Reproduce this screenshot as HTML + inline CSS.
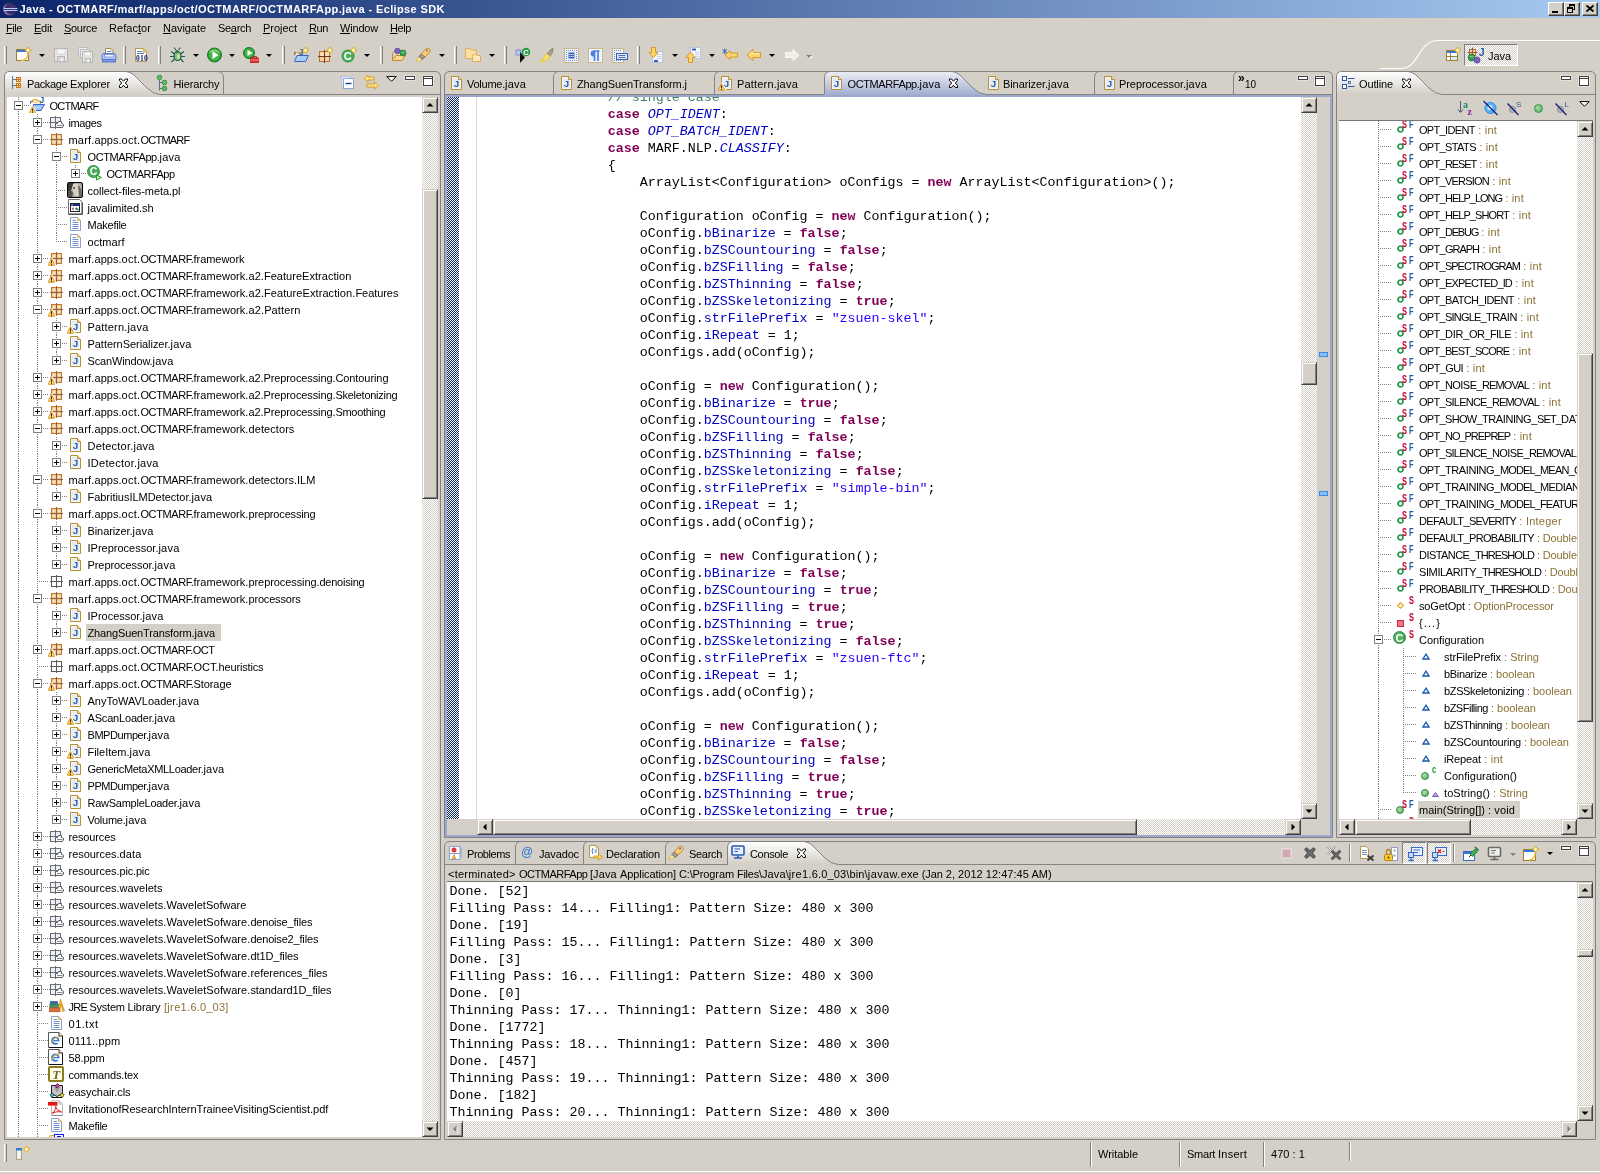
<!DOCTYPE html>
<html lang="en"><head><meta charset="utf-8"><title>Java - OCTMARF/marf/apps/oct/OCTMARF/OCTMARFApp.java - Eclipse SDK</title>
<style>
*{box-sizing:border-box;margin:0;padding:0}
html,body{width:1600px;height:1174px;overflow:hidden;background:#d4d0c8}
body{font-family:"Liberation Sans",sans-serif;font-size:11px;color:#000;position:relative}
div,span.a,svg.ic{position:absolute}
.t{position:absolute;white-space:pre;line-height:17px;height:17px}
.mono{font-family:"Liberation Mono",monospace;font-size:13.33px}
.code{position:absolute;white-space:pre;line-height:17px;height:17px;font-family:"Liberation Mono",monospace;font-size:13.33px;left:479.700px}
.con{position:absolute;white-space:pre;line-height:17px;height:17px;font-family:"Liberation Mono",monospace;font-size:13.33px;left:449.500px}
.k{color:#7f0055;font-weight:bold}
.f{color:#0000c0}
.sf{color:#0000c0;font-style:italic}
.s{color:#2a00ff}
.c{color:#3f7f5f}
.q{color:#8b7135}
.sbtrack{background-color:#fff;background-image:conic-gradient(#d4d0c8 25%,#fff 0 50%,#d4d0c8 0 75%,#fff 0);background-size:2px 2px}
.sbb{width:16px;height:16px;background:#d4d0c8;border:1px solid;border-color:#d4d0c8 #404040 #404040 #d4d0c8;box-shadow:inset 1px 1px 0 #fff,inset -1px -1px 0 #808080}
.sbb svg{left:1px!important;top:1px!important}
.sbt{background:#d4d0c8;border:1px solid;border-color:#d4d0c8 #404040 #404040 #d4d0c8;box-shadow:inset 1px 1px 0 #fff,inset -1px -1px 0 #808080;box-sizing:content-box;padding:1px}
.exp{width:9px;height:9px;border:1px solid #808080;background:#fff}
.exp i{position:absolute;left:1px;top:3px;width:5px;height:1px;background:#000}
.exp b{position:absolute;left:3px;top:1px;width:1px;height:5px;background:#000}
.vd{width:1px;background-image:linear-gradient(#808080 50%,transparent 0);background-size:1px 2px}
.hd{height:1px;background-image:linear-gradient(90deg,#808080 50%,transparent 0);background-size:2px 1px}
.sep{width:3px;height:18px;border-left:1px solid #fff;border-right:1px solid #808080;background:#d4d0c8}
.dd{width:0;height:0;border-left:3px solid transparent;border-right:3px solid transparent;border-top:3px solid #000}
.u{text-decoration:underline}
.cp{letter-spacing:-.58px}
</style></head>
<body>
<svg width="0" height="0" style="position:absolute"><defs><radialGradient id="pg" cx=".5" cy=".5" r=".62"><stop offset="0" stop-color="#fef6cc"/><stop offset="1" stop-color="#e6b68c"/></radialGradient></defs></svg>
<div id="root" style="left:0;top:0;width:1600px;height:1174px;will-change:transform;background:#d4d0c8;overflow:hidden">
<div style="left:0;top:0;width:1600px;height:18px;background:linear-gradient(90deg,#0a246a 0%,#a6caf0 100%)"></div>
<svg class="ic" style="left:2px;top:1px" width="18" height="16" viewBox="0 0 18 16"><defs><radialGradient id="eg" cx=".62" cy=".45" r=".62"><stop offset="0" stop-color="#4a4088"/><stop offset=".6" stop-color="#2e2660"/><stop offset=".85" stop-color="#6a5498"/><stop offset="1" stop-color="#d8a0c8"/></radialGradient></defs><ellipse cx="8.200" cy="8" rx="7" ry="6.300" fill="url(#eg)"/><path d="M9 2 Q14.500 3 15.200 8 Q14.500 13 9 14 Q15.500 13.500 15.300 8 Q15.500 2.500 9 2 Z" fill="#1a1a58"/><path d="M2 7.500 H15.500 M2 9.500 H15.500" stroke="#b8d0f4" stroke-width="1"/><path d="M1.500 8.500 H15.500" stroke="#3a3a80" stroke-width="1"/></svg>
<div class="t" style="left:19.500px;top:1px;color:#fff;font-weight:bold;font-size:11px;line-height:16px;height:16px;letter-spacing:.38px">Java - OCTMARF/marf/apps/oct/OCTMARF/OCTMARFApp.java - Eclipse SDK</div>
<div style="left:1548px;top:2px;width:16px;height:14px;background:#d4d0c8;border:1px solid;border-color:#fff #404040 #404040 #fff;box-shadow:inset -1px -1px 0 #808080"></div><div style="left:1564px;top:2px;width:16px;height:14px;background:#d4d0c8;border:1px solid;border-color:#fff #404040 #404040 #fff;box-shadow:inset -1px -1px 0 #808080"></div><div style="left:1582px;top:2px;width:16px;height:14px;background:#d4d0c8;border:1px solid;border-color:#fff #404040 #404040 #fff;box-shadow:inset -1px -1px 0 #808080"></div><div style="left:1552px;top:11px;width:6px;height:2px;background:#000"></div><svg class="ic" style="left:1567px;top:4px" width="10" height="10" viewBox="0 0 10 10"><g shape-rendering="crispEdges"><path d="M2.500 .5 H7.500 V5.500 H2.500 Z" fill="none" stroke="#000"/><rect x="2" y="0" width="6" height="2" fill="#000"/><rect x="0" y="3" width="6" height="6" fill="#d4d0c8"/><path d="M.5 3.500 H5.500 V8.500 H.5 Z" fill="none" stroke="#000"/><rect x="0" y="3" width="6" height="2" fill="#000"/></g></svg><svg class="ic" style="left:1585px;top:4px" width="10" height="10" viewBox="0 0 10 10"><path d="M1.500 1.500 L8.500 7.500 M8.500 1.500 L1.500 7.500" stroke="#000" stroke-width="1.700"/></svg>
<div class="t" style="left:6px;top:20px;letter-spacing:-0.43px"><span class="u">F</span>ile</div>
<div class="t" style="left:34px;top:20px;letter-spacing:-0.242px"><span class="u">E</span>dit</div>
<div class="t" style="left:64px;top:20px;letter-spacing:-0.312px"><span class="u">S</span>ource</div>
<div class="t" style="left:109px;top:20px;letter-spacing:0.051px">Refac<span class="u">t</span>or</div>
<div class="t" style="left:163px;top:20px;letter-spacing:-0.055px"><span class="u">N</span>avigate</div>
<div class="t" style="left:218px;top:20px;letter-spacing:-0.312px">Se<span class="u">a</span>rch</div>
<div class="t" style="left:263px;top:20px;letter-spacing:-0.036px"><span class="u">P</span>roject</div>
<div class="t" style="left:309px;top:20px;letter-spacing:-0.396px"><span class="u">R</span>un</div>
<div class="t" style="left:340px;top:20px;letter-spacing:-0.188px"><span class="u">W</span>indow</div>
<div class="t" style="left:390px;top:20px;letter-spacing:-0.406px"><span class="u">H</span>elp</div>
<div class="sep" style="left:4px;top:46px;height:18px"></div><svg class="ic" style="left:16px;top:47px" width="16" height="16" viewBox="0 0 16 16"><rect x=".5" y="2.500" width="12" height="11" fill="#fff" stroke="#a08030"/><rect x="1" y="3" width="11" height="2" fill="#3a78d8"/><path d="M12 6 Q12 13 5 13.500" stroke="#f0c040" stroke-width="1.500" fill="none"/><path d="M12 0 l1.200 2 l2 1.200 l-2 1.200 l-1.200 2 l-1.200 -2 l-2 -1.200 l2 -1.200 Z" fill="#fff8c0" stroke="#d8a010" stroke-width=".9"/></svg><div class="dd" style="left:39px;top:54px;border-top-color:#000"></div><svg class="ic" style="left:53px;top:47px" width="16" height="16" viewBox="0 0 16 16"><path d="M1.500 1.500 H14.500 V14.500 H1.500 Z" fill="#e8e8e8" stroke="#b4b4b4"/><rect x="4" y="2" width="8" height="5" fill="#f8f8f8" stroke="#c8c8c8" stroke-width=".6"/><rect x="4.500" y="9.500" width="7" height="5" fill="#dadada" stroke="#b8b8b8"/><rect x="8" y="11" width="2" height="3" fill="#f4f4f4"/></svg><svg class="ic" style="left:77px;top:47px" width="16" height="16" viewBox="0 0 16 16"><path d="M1.500 .5 H10.500 V9 H1.500 Z" fill="#eee" stroke="#bcbcbc"/><path d="M3.500 2.500 H12.500 V11 H3.500 Z" fill="#eee" stroke="#bcbcbc"/><path d="M5.500 4.500 H15.500 V15.500 H5.500 Z" fill="#e8e8e8" stroke="#b4b4b4"/><rect x="7.500" y="5" width="6" height="4" fill="#f8f8f8" stroke="#c8c8c8" stroke-width=".6"/><rect x="8" y="11.500" width="5.500" height="4" fill="#dadada" stroke="#b8b8b8"/><rect x="10.500" y="12.500" width="1.500" height="3" fill="#f4f4f4"/></svg><svg class="ic" style="left:101px;top:47px" width="16" height="16" viewBox="0 0 16 16"><path d="M4.500 1.500 H10 L12 3.500 V8 H4.500 Z" fill="#fff" stroke="#9a8a60"/><path d="M10 1.500 V3.500 H12" fill="#f4d880" stroke="#c8a040" stroke-width=".7"/><path d="M6 4.500 H10 M6 6.500 H10.500" stroke="#5a80d0"/><path d="M1 9 Q1 6.500 3 6.500 H13 Q15 6.500 15 9 V12.500 H1 Z" fill="#b4c8f2" stroke="#5878d0"/><rect x="1.500" y="12.500" width="13" height="2.500" fill="#7a98e4" stroke="#5878d0"/><rect x="3.500" y="7.500" width="9" height="2.500" fill="#f0f4fc" stroke="#6a88d8" stroke-width=".7"/></svg><div class="sep" style="left:123px;top:46px;height:18px"></div><svg class="ic" style="left:134px;top:47px" width="16" height="16" viewBox="0 0 16 16"><path d="M1.500 1.500 H9 L12.500 5 V14.500 H1.500 Z" fill="#fff" stroke="#b49a50"/><path d="M9 1.500 V5 H12.500 Z" fill="#f4d880" stroke="#c8a040" stroke-width=".7"/><path d="M3 4.500 H8 M3 6.500 H10" stroke="#5a80d0"/><text x="2" y="14" font-family="Liberation Serif, serif" font-weight="bold" font-size="7.500" fill="#14206a" letter-spacing=".3">010</text></svg><div class="sep" style="left:158px;top:46px;height:18px"></div><svg class="ic" style="left:169px;top:47px" width="16" height="16" viewBox="0 0 16 16"><ellipse cx="8.500" cy="9" rx="3.500" ry="4.500" fill="#8cc078" stroke="#1a5a4a" stroke-width="1.200"/><circle cx="8" cy="4.500" r="1.600" fill="#2a6a5a"/><path d="M5.500 7 L2 4.500 M5 9.500 L1 9.500 M5.500 12 L2.500 15 M11.500 7 L15 4.500 M12 9.500 L16 9.500 M11.500 12 L14.500 15 M7 3 L5 .5 M9.500 3 L11.500 .5" stroke="#1a5a4a" stroke-width="1.100" fill="none"/><ellipse cx="9.500" cy="9.500" rx="1.500" ry="2.500" fill="#c8e8b0"/></svg><div class="dd" style="left:193px;top:54px;border-top-color:#000"></div><svg class="ic" style="left:207px;top:47px" width="16" height="16" viewBox="0 0 16 16"><circle cx="7.500" cy="8" r="7" fill="#2a9a34" stroke="#1a7a24"/><circle cx="7.500" cy="8" r="5.500" fill="#48b84c"/><path d="M5.500 4 L11.500 8 L5.500 12 Z" fill="#fff"/><path d="M2.500 5.500 Q7 1 12.500 5.500" stroke="#a8e8a0" stroke-width="1.200" fill="none" opacity=".7"/></svg><div class="dd" style="left:229px;top:54px;border-top-color:#000"></div><svg class="ic" style="left:243px;top:47px" width="16" height="16" viewBox="0 0 16 16"><circle cx="6" cy="6" r="5.500" fill="#2a9a34" stroke="#1a7a24"/><circle cx="6" cy="6" r="4.200" fill="#48b84c"/><path d="M4.500 3 L9.500 6 L4.500 9 Z" fill="#fff"/><rect x="7.500" y="11" width="8.500" height="5" rx=".8" fill="#e03030" stroke="#a81818" stroke-width=".8"/><path d="M10 11 V9.700 H13.500 V11" fill="none" stroke="#a81818" stroke-width="1"/><path d="M7.500 13 H16" stroke="#f8b0b0" stroke-width=".8"/></svg><div class="dd" style="left:266px;top:54px;border-top-color:#000"></div><div class="sep" style="left:282px;top:46px;height:18px"></div><svg class="ic" style="left:293px;top:47px" width="16" height="16" viewBox="0 0 16 16"><path d="M1 5.500 H4.500 M1.500 5.500 V8" stroke="#7a6ab0" fill="none"/><path d="M2.500 8 V6.500 L3.500 5.500 H10 V8" fill="#fbe3a0" stroke="#d6a64a"/><path d="M4 8.500 H15.500 L12.500 14.500 H1.500 Z" fill="#a9cdf6" stroke="#3a62c8"/><text x="5.5" y="8" font-family="Liberation Sans, sans-serif" font-weight="bold" font-size="9" fill="#2a5fa8">J</text><path d="M12.5 0 l1.200 2 l2 1.200 l-2 1.200 l-1.200 2 l-1.200 -2 l-2 -1.200 l2 -1.200 Z" fill="#fff8c0" stroke="#d8a010" stroke-width=".9"/></svg><svg class="ic" style="left:318px;top:47px" width="16" height="16" viewBox="0 0 16 16"><rect x="1.500" y="4.500" width="10" height="10" fill="#f0c898" stroke="#b8743a"/><rect x="2.500" y="5.500" width="3.500" height="3.500" fill="#f8e0b8"/><rect x="7.500" y="5.500" width="3.500" height="3.500" fill="#f8e0b8"/><rect x="2.500" y="10" width="3.500" height="3.500" fill="#f4d4a4"/><rect x="7.500" y="10" width="3.500" height="3.500" fill="#f4d4a4"/><path d="M6.500 3 V16 M0 9.500 H13" stroke="#6a3a1a" fill="none"/><path d="M12 0 l1.200 2 l2 1.200 l-2 1.200 l-1.200 2 l-1.200 -2 l-2 -1.200 l2 -1.200 Z" fill="#fff8c0" stroke="#d8a010" stroke-width=".9"/></svg><svg class="ic" style="left:341px;top:47px" width="16" height="16" viewBox="0 0 16 16"><circle cx="7" cy="9" r="6.500" fill="#2f9a44"/><circle cx="7" cy="9" r="5.300" fill="#4fae60"/><text x="2.800" y="13" font-family="Liberation Sans, sans-serif" font-weight="bold" font-size="11" fill="#fff">C</text><path d="M12.5 0 l1.200 2 l2 1.200 l-2 1.200 l-1.200 2 l-1.200 -2 l-2 -1.200 l2 -1.200 Z" fill="#fff8c0" stroke="#d8a010" stroke-width=".9"/></svg><div class="dd" style="left:364px;top:54px;border-top-color:#000"></div><div class="sep" style="left:380px;top:46px;height:18px"></div><svg class="ic" style="left:391px;top:47px" width="16" height="16" viewBox="0 0 16 16"><path d="M1.500 6 V13.500 H11 L14.500 8.500 H5 L2.500 12" fill="#fbd88a" stroke="#c8862a"/><path d="M1.500 6.500 L3 5 H8 L9 6.500 H12 V8.500" fill="#fde8b0" stroke="#c8862a"/><circle cx="6.500" cy="4" r="2.800" fill="#7a62c0" stroke="#5a42a0" stroke-width=".8"/><circle cx="12" cy="6" r="3" fill="#3aa050" stroke="#1a8030" stroke-width=".8"/><path d="M10.500 5.500 H13.500" stroke="#9ad8a0" stroke-width=".8"/></svg><svg class="ic" style="left:415px;top:47px" width="16" height="16" viewBox="0 0 16 16"><path d="M1 14.500 L4 9.500 L7 12.500 Z" fill="#fff4b0" stroke="#e0b830" stroke-width=".8"/><path d="M4 9.500 L6.500 6.500 L10 10 L7 12.500 Z" fill="#a09a98" stroke="#6a6462" stroke-width=".8"/><path d="M6.500 6.500 L11 1.500 Q13.500 .5 15 2.500 Q15.500 4.500 14.500 5.500 L10 10 Z" fill="#f8cc70" stroke="#c8862a" stroke-width=".9"/><circle cx="12" cy="3.500" r=".9" fill="#3a62c8"/></svg><div class="dd" style="left:439px;top:54px;border-top-color:#000"></div><div class="sep" style="left:454px;top:46px;height:18px"></div><svg class="ic" style="left:465px;top:47px" width="16" height="16" viewBox="0 0 16 16"><path d="M.5 3.500 Q.5 1.500 2 1.500 H5 L6.500 3 H11.500 V11.500 H.5 Z" fill="#fbe0a0" stroke="#dcae58"/><path d="M7.500 9.500 Q7.500 7.500 9 7.500 H11 L12 8.500 H15.500 V14.500 H7.500 Z" fill="#fce8b8" stroke="#dcae58"/></svg><div class="dd" style="left:489px;top:54px;border-top-color:#000"></div><div class="sep" style="left:504px;top:46px;height:18px"></div><svg class="ic" style="left:515px;top:47px" width="16" height="16" viewBox="0 0 16 16"><rect x="1" y="3" width="5" height="5" fill="#b8c8f4" stroke="#6a84d8" stroke-width=".8"/><path d="M2 2.500 H5" stroke="#c090d0"/><path d="M5 5 V16 L10 10.500 Z" fill="#111"/><circle cx="11" cy="5" r="4.300" fill="#2f9a44"/><text x="8.300" y="8" font-family="Liberation Sans, sans-serif" font-weight="bold" font-size="7.500" fill="#fff">C</text></svg><svg class="ic" style="left:539px;top:47px" width="16" height="16" viewBox="0 0 16 16"><path d="M.5 14.500 H5.500" stroke="#f0d020" stroke-width="1.500"/><path d="M3 12.500 L8 6.500 L11.500 9 L7 13.500 Z" fill="#f8e060" stroke="#e0c020" stroke-width=".6"/><path d="M8 6.500 L11.500 2.500 L14 4.500 L11.500 9 Z" fill="#aaa090" stroke="#8a8070" stroke-width=".6"/><path d="M11.500 2.500 L14.500 .5 L14 4.500 Z" fill="#8a8070"/></svg><svg class="ic" style="left:564px;top:47px" width="16" height="16" viewBox="0 0 16 16"><rect x=".5" y="1.500" width="14" height="14" fill="#eef2fc" stroke="#c8b888"/><path d="M2 3.500 H13 M2 13.500 H13" stroke="#6a90d8" stroke-dasharray="1 1"/><path d="M2.500 5 V12 M12.500 5 V12" stroke="#6a90d8" stroke-dasharray="1 1"/><rect x="4.500" y="5.500" width="6" height="6" fill="#3a5eb8"/><path d="M5 7.500 H10 M5 9.500 H10" stroke="#c8d8f8" stroke-width=".8"/></svg><svg class="ic" style="left:588px;top:47px" width="16" height="16" viewBox="0 0 16 16"><rect x=".5" y="1.500" width="14" height="14" fill="#fff" stroke="#c8b888"/><rect x="1.500" y="2.500" width="12" height="12" fill="#e8f0fc"/><path d="M11.500 4 H6.500 Q3.500 4 3.500 6.500 Q3.500 9 6.500 9 V14 M6.500 4 V14 M10 4 V14" stroke="#4a80d8" stroke-width="1.600" fill="none"/><rect x="4" y="4.500" width="2.500" height="4" fill="#4a80d8"/></svg><svg class="ic" style="left:612px;top:47px" width="16" height="16" viewBox="0 0 16 16"><rect x=".5" y="1.500" width="11" height="14" fill="#eef2fc" stroke="#c8b888"/><path d="M2 3.500 H10 M2 5.500 H4 M2 7.500 H4 M2 9.500 H4 M2 11.500 H4 M2 13.500 H10" stroke="#6a90d8" stroke-dasharray="1 1"/><rect x="4.500" y="6.500" width="11" height="6" fill="#e4ecfa" stroke="#3a5eb8"/><path d="M6.500 8.500 H13.500 M6.500 10.500 H13.500" stroke="#3a5eb8" stroke-width=".9"/></svg><div class="sep" style="left:637px;top:46px;height:18px"></div><svg class="ic" style="left:648px;top:47px" width="16" height="16" viewBox="0 0 16 16"><rect x="4.500" y="4.500" width="10" height="11" fill="#f4f6fc" stroke="#b8c4e0"/><path d="M9 7.500 H13 M9 9.500 H13 M9 11.500 H13" stroke="#c8d0e8"/><rect x="6" y="13" width="4" height="2" fill="#3a5eb8"/><path d="M3.500 .5 H7.500 V5.500 H10 L5.500 10.500 L1 5.500 H3.500 Z" fill="#fbd470" stroke="#d89a20"/></svg><div class="dd" style="left:672px;top:54px;border-top-color:#000"></div><svg class="ic" style="left:685px;top:47px" width="16" height="16" viewBox="0 0 16 16"><rect x="5.500" y=".5" width="10" height="11" fill="#f4f6fc" stroke="#b8c4e0"/><path d="M10 5.500 H14 M10 7.500 H14 M10 9.500 H14" stroke="#c8d0e8"/><rect x="7" y="1.500" width="4" height="2" fill="#3a5eb8"/><path d="M3.500 15.500 H7.500 V10.500 H10 L5.500 5 L1 10.500 H3.500 Z" fill="#fbd470" stroke="#d89a20"/></svg><div class="dd" style="left:709px;top:54px;border-top-color:#000"></div><svg class="ic" style="left:722px;top:47px" width="16" height="16" viewBox="0 0 16 16"><path d="M3 8 L8 3.500 V6 H15.500 V10 H8 V12.500 Z" fill="#fbd470" stroke="#d89a20"/><path d="M.5 2.500 L5 6 M.5 6 L5 2.500 M2.700 1.500 V7" stroke="#2a5ab8" stroke-width=".9"/></svg><svg class="ic" style="left:746px;top:47px" width="16" height="16" viewBox="0 0 16 16"><path d="M1 8 L7 2.500 V5.500 H14.500 V10.500 H7 V13.500 Z" fill="#fbd470" stroke="#d89a20"/><path d="M3 8 L6.500 4.800 V6.500 H13.500" stroke="#fff0b8" fill="none"/></svg><div class="dd" style="left:769px;top:54px;border-top-color:#000"></div><svg class="ic" style="left:784px;top:47px" width="16" height="16" viewBox="0 0 16 16"><path d="M15 8 L9 2.500 V5.500 H1.500 V10.500 H9 V13.500 Z" fill="#eeeeea" stroke="#f8f8f6"/></svg><div class="dd" style="left:806px;top:55px;border-top-color:#808080"></div><div class="dd" style="left:807px;top:56px;border-top-color:#fff;z-index:-1"></div>
<svg class="ic" style="left:1380px;top:38px" width="220" height="34" viewBox="0 0 220 34"><path d="M0 30.500 H21 C39 30.500 38 2.500 58 2.500 H220" fill="none" stroke="#fff" stroke-width="1.200"/></svg><div style="left:1464px;top:44px;width:54px;height:22px;border:1px solid;border-color:#808080 #fff #fff #808080;background-color:#fff;background-image:conic-gradient(#d4d0c8 25%,#fff 0 50%,#d4d0c8 0 75%,#fff 0);background-size:2px 2px"></div><svg class="ic" style="left:1446px;top:47px" width="16" height="16" viewBox="0 0 16 16"><rect x=".5" y="3.500" width="11" height="10" fill="#fff" stroke="#a08030"/><rect x="1" y="4" width="10" height="2" fill="#3a78d8"/><path d="M4.500 6 V13 M.5 9.500 H11.500" stroke="#a08030"/><rect x="5" y="10" width="6" height="3" fill="#d8ecfc"/><path d="M11.5 0 l1.200 2 l2 1.200 l-2 1.200 l-1.200 2 l-1.200 -2 l-2 -1.200 l2 -1.200 Z" fill="#fff8c0" stroke="#d8a010" stroke-width=".9"/></svg><svg class="ic" style="left:1467px;top:47px" width="18" height="17" viewBox="0 0 18 17"><rect x="2.500" y="2.500" width="6" height="6" fill="#f4d8a8" stroke="#b06a3a"/><path d="M5.500 .5 V10 M.5 5.500 H10.500" stroke="#9a5a3a"/><circle cx="4.500" cy="10.500" r="3.400" fill="#3a9e50" stroke="#1a7a30" stroke-width=".8"/><path d="M2.500 9.500 H6.500" stroke="#8fd49a" stroke-width=".8"/><circle cx="10" cy="13" r="3.100" fill="#7a62c0" stroke="#5a42a0" stroke-width=".8"/><text x="11.8" y="8.5" font-family="Liberation Sans, sans-serif" font-weight="bold" font-size="10.5" fill="#2a5fa8">J</text></svg><div class="t" style="left:1488px;top:48px"><span style="letter-spacing:-0.062px">Java</span></div>
<svg class="ic" style="left:0;top:0;z-index:1" width="1600" height="1174" viewBox="0 0 1600 1174"><defs><linearGradient id="gw" x1="0" y1="0" x2="0" y2="1"><stop offset="0" stop-color="#fff"/><stop offset="1" stop-color="#d4d0c8"/></linearGradient><linearGradient id="gb" x1="0" y1="0" x2="0" y2="1"><stop offset="0" stop-color="#eceef6"/><stop offset=".45" stop-color="#c8cee4"/><stop offset="1" stop-color="#9ba8cc"/></linearGradient></defs><path d="M4.500 1139.500 V77 Q4.500 71.500 10 71.500 H435 Q440.500 71.500 440.500 77 V1139.500 Z" fill="none" stroke="#848284" stroke-width="1" /><path d="M5 94 V77 Q5 72 10 72 H126 Q132 71.5 138 78.5 L147 87.5 Q153 93.5 160 94 Z" fill="url(#gw)" stroke="none" stroke-width="1" /><path d="M126 71.500 Q132 72.0 138 79.0 L147 88.0 Q153 94.0 160 94.5 H440" fill="none" stroke="#848284" stroke-width="1" /><path d="M218 71.500 Q223.500 72 223.500 78 V94" fill="none" stroke="#848284" stroke-width="1" /><path d="M444.500 837.500 V77 Q444.500 71.500 450 71.500 H1327 Q1332.500 71.500 1332.500 77 V837.500 Z" fill="none" stroke="#848284" stroke-width="1" /><path d="M446 96 H1331 V836 H446 Z" fill="none" stroke="#9ba8cc" stroke-width="2"/><path d="M445 94.500 H1332" fill="none" stroke="#848284" stroke-width="1" /><path d="M824.500 94 V78 Q824.500 72 830 72 H952 Q958 71.5 964 78.5 L973 87.5 Q979 93.5 986 94 L986 97 H824.500 Z" fill="url(#gb)" stroke="none" stroke-width="1" /><path d="M824.500 94 V78 Q824.500 71.500 830 71.500 H952 Q958 72.0 964 79.0 L973 88.0 Q979 94.0 986 94.5" fill="none" stroke="#848284" stroke-width="1" /><path d="M825 95.500 H992" stroke="#9ba8cc" stroke-width="1"/><path d="M553.5 94 V78 Q553.5 72 558 71.500" fill="none" stroke="#848284" stroke-width="1" /><path d="M714.5 94 V78 Q714.5 72 719 71.500" fill="none" stroke="#848284" stroke-width="1" /><path d="M1094.5 94 V78 Q1094.5 72 1099 71.500" fill="none" stroke="#848284" stroke-width="1" /><path d="M1233.5 94 V78 Q1233.5 72 1238 71.500" fill="none" stroke="#848284" stroke-width="1" /><path d="M1336.500 837.500 V77 Q1336.500 71.500 1342 71.500 H1590 Q1595.500 71.500 1595.500 77 V837.500 Z" fill="none" stroke="#848284" stroke-width="1" /><path d="M1337 94 V77 Q1337 72 1342 72 H1408 Q1414 71.5 1420 78.5 L1429 87.5 Q1435 93.5 1442 94 Z" fill="url(#gw)" stroke="none" stroke-width="1" /><path d="M1408 71.500 Q1414 72.0 1420 79.0 L1429 88.0 Q1435 94.0 1442 94.5 H1595" fill="none" stroke="#848284" stroke-width="1" /><path d="M1339 120.500 H1593" fill="none" stroke="#7a7874" stroke-width="1" /><path d="M444.500 1139.500 V847 Q444.500 841.500 450 841.500 H1590 Q1595.500 841.500 1595.500 847 V1139.500 Z" fill="none" stroke="#848284" stroke-width="1" /><path d="M727.500 864 V848 Q727.500 842 733 842 H804 Q810 841.5 816 848.5 L825 857.5 Q831 863.5 838 864 Z" fill="url(#gw)" stroke="none" stroke-width="1" /><path d="M445 864.500 H727.500 V848 Q727.500 841.500 733 841.500" fill="none" stroke="#848284" stroke-width="1" /><path d="M804 841.500 Q810 842.0 816 849.0 L825 858.0 Q831 864.0 838 864.5 H1595" fill="none" stroke="#848284" stroke-width="1" /><path d="M515.5 864 V848 Q515.5 842 520 841.500" fill="none" stroke="#848284" stroke-width="1" /><path d="M583.5 864 V848 Q583.5 842 588 841.500" fill="none" stroke="#848284" stroke-width="1" /><path d="M665.5 864 V848 Q665.5 842 670 841.500" fill="none" stroke="#848284" stroke-width="1" /><path d="M447 881.500 H1593" fill="none" stroke="#7a7874" stroke-width="1" /></svg>
<div style="left:7px;top:97px;width:415px;height:1040px;background:#fff;overflow:hidden"></div>
<div style="left:0;top:0;width:422px;height:1137px;overflow:hidden;background:transparent"><div class="vd" style="left:18px;top:97px;height:4px"></div>
<div class="vd" style="left:18px;top:111px;height:3px"></div>
<div class="hd" style="left:24px;top:105px;width:5px"></div>
<div class="exp" style="left:14px;top:101px"><i></i></div>
<svg class="ic" style="left:29px;top:97px" width="16" height="16" viewBox="0 0 16 16"><path d="M2.5 5.5 L4 2.5 H8 L9 4 H11.5 V7" fill="#fbe3a0" stroke="#d6a64a"/><path d="M1 4.5 H4 M1.5 4.5 V7" stroke="#7a6ab0" fill="none"/><path d="M4.5 7.5 H15.5 L12 13.5 H2.5 Z" fill="#7fb0ee" stroke="#3a62c8"/><path d="M5.5 8.5 H14 L11.5 12.5 H4 Z" fill="#a9cdf6"/><text x="10.6" y="6.4" font-family="Liberation Sans, sans-serif" font-weight="bold" font-size="8.5" fill="#2a5fa8">J</text><g transform="translate(0,1.2)"><path d="M3.500 7.600 L7.800 15.500" stroke="#fff" stroke-width="1.600" fill="none"/><path d="M3.500 8.600 L.4 14.600 Q.2 15.600 1.200 15.600 L5.800 15.600 Q6.800 15.600 6.600 14.600 Z" fill="#fbd070" stroke="#d8921c" stroke-width=".9"/><rect x="3" y="10.4" width="1" height="3" fill="#3a2a10"/><rect x="3" y="14" width="1" height="1" fill="#3a2a10"/></g></svg>
<div class="t" style="left:49.5px;top:98px"><span style="letter-spacing:-0.768px">OCTMARF</span></div>
<div class="vd" style="left:18px;top:114px;height:17px"></div>
<div class="vd" style="left:37px;top:114px;height:4px"></div>
<div class="vd" style="left:37px;top:128px;height:3px"></div>
<div class="hd" style="left:43px;top:122px;width:5px"></div>
<div class="exp" style="left:33px;top:118px"><i></i><b></b></div>
<svg class="ic" style="left:48px;top:114px" width="16" height="16" viewBox="0 0 16 16"><rect x="2.500" y="3.500" width="10" height="10" fill="#eaf0fb" stroke="#6e6e6e"/><path d="M7.500 2 V15 M1 8.500 H14" stroke="#6e6e6e" fill="none"/><path d="M7.500 13.500 V9.500 H9.500 L10.500 7.500 H13.500 V9.500 H14.500 L15.800 11 L14.500 13.500 Z" fill="#fff" stroke="#5e5e5e"/><path d="M9 11.500 H14.500" stroke="#8a8a8a"/></svg>
<div class="t" style="left:68.5px;top:115px"><span style="letter-spacing:-0.411px">images</span></div>
<div class="vd" style="left:18px;top:131px;height:17px"></div>
<div class="vd" style="left:37px;top:131px;height:4px"></div>
<div class="vd" style="left:37px;top:145px;height:3px"></div>
<div class="hd" style="left:43px;top:139px;width:5px"></div>
<div class="exp" style="left:33px;top:135px"><i></i></div>
<svg class="ic" style="left:48px;top:131px" width="16" height="16" viewBox="0 0 16 16"><rect x="3.500" y="3.500" width="10" height="10" fill="#e9bc8e" stroke="#c6782c"/><rect x="4" y="4" width="4" height="4" fill="url(#pg)"/><rect x="9" y="4" width="4" height="4" fill="url(#pg)"/><rect x="4" y="9" width="4" height="4" fill="url(#pg)"/><rect x="9" y="9" width="4" height="4" fill="url(#pg)"/><path d="M8.500 2 V15 M2 8.500 H15" stroke="#94603e" stroke-width="1" fill="none"/></svg>
<div class="t" style="left:68.5px;top:132px"><span style="letter-spacing:0.188px">marf.</span><span style="letter-spacing:0.013px">apps.</span><span style="letter-spacing:0.312px">oct.</span><span style="letter-spacing:-0.768px">OCTMARF</span></div>
<div class="vd" style="left:18px;top:148px;height:17px"></div>
<div class="vd" style="left:37px;top:148px;height:17px"></div>
<div class="vd" style="left:56px;top:148px;height:4px"></div>
<div class="vd" style="left:56px;top:162px;height:3px"></div>
<div class="hd" style="left:62px;top:156px;width:5px"></div>
<div class="exp" style="left:52px;top:152px"><i></i></div>
<svg class="ic" style="left:67px;top:148px" width="16" height="16" viewBox="0 0 16 16"><path d="M3.5 1.5 H10.5 L13.5 4.5 V14.5 H3.5 Z" fill="#fff" stroke="#b9902f"/><path d="M4.5 2.5 H10 L12.5 5 V13.5 H4.5 Z" fill="#e4ecf8"/><path d="M10.5 1.5 V4.5 H13.5" fill="#f6e3a8" stroke="#b9902f"/><text x="5.7" y="12" font-family="Liberation Sans, sans-serif" font-weight="bold" font-size="9.8" fill="#2a5fa8">J</text></svg>
<div class="t" style="left:87.5px;top:149px"><span style="letter-spacing:-0.402px">OCTMARFApp.</span><span style="letter-spacing:0.203px">java</span></div>
<div class="vd" style="left:18px;top:165px;height:17px"></div>
<div class="vd" style="left:37px;top:165px;height:17px"></div>
<div class="vd" style="left:56px;top:165px;height:17px"></div>
<div class="vd" style="left:75px;top:165px;height:4px"></div>
<div class="hd" style="left:81px;top:173px;width:5px"></div>
<div class="exp" style="left:71px;top:169px"><i></i><b></b></div>
<svg class="ic" style="left:86px;top:165px" width="16" height="16" viewBox="0 0 16 16"><circle cx="7.500" cy="6.500" r="6.500" fill="#37964a"/><circle cx="7.500" cy="6.500" r="5.500" fill="#4aaa5c"/><text x="3.800" y="10.200" font-family="Liberation Sans, sans-serif" font-weight="bold" font-size="10.500" fill="#fff">C</text><path d="M10.500 10 L15.500 12.500 L10.500 15 Z" fill="#c8f0b0" stroke="#2f9a2f" stroke-width="1"/></svg>
<div class="t" style="left:106.5px;top:166px"><span style="letter-spacing:-0.536px">OCTMARFApp</span></div>
<div class="vd" style="left:18px;top:182px;height:17px"></div>
<div class="vd" style="left:37px;top:182px;height:17px"></div>
<div class="vd" style="left:56px;top:182px;height:17px"></div>
<div class="hd" style="left:58px;top:190px;width:8px"></div>
<svg class="ic" style="left:67px;top:182px" width="16" height="16" viewBox="0 0 16 16"><rect x=".5" y=".5" width="15" height="15" rx="1.5" fill="#a8a49c" stroke="#000"/><path d="M1 1 H7 L4 8 L1 10 Z" fill="#3a3834"/><path d="M6 2 Q12 0 14 5 L14 14 H8 Q6 9 5 7 Z" fill="#d6d2c8"/><path d="M1 10 L4 8 L6 11 L5 15 H1 Z" fill="#55524c"/><path d="M11 3 Q15 5 15 15 H12 Z" fill="#6a665e"/><circle cx="7" cy="6" r="1" fill="#4a4640"/></svg>
<div class="t" style="left:87.5px;top:183px"><span style="letter-spacing:-0.055px">collect-files-meta.pl</span></div>
<div class="vd" style="left:18px;top:199px;height:17px"></div>
<div class="vd" style="left:37px;top:199px;height:17px"></div>
<div class="vd" style="left:56px;top:199px;height:17px"></div>
<div class="hd" style="left:58px;top:207px;width:9px"></div>
<svg class="ic" style="left:67px;top:199px" width="16" height="16" viewBox="0 0 16 16"><path d="M1.500 .5 H12.500 L15.500 3.500 V15.500 H1.500 Z" fill="#fff" stroke="#6e6e6e"/><path d="M2 15 H15 M15 3.500 V15" stroke="#3c3c3c"/><rect x="3.500" y="4.500" width="9" height="8" fill="#fff" stroke="#222"/><rect x="4" y="5" width="8" height="2" fill="#1c2ca0"/><rect x="4.500" y="5.300" width="1.200" height="1.200" fill="#f0d020"/><path d="M6.500 8 L4.800 9.700 L6.500 11.400 Z" fill="#d02020"/><path d="M8 9.700 L9.300 8.300 L10.600 9.700 L9.300 11 Z" fill="#1060e0"/><circle cx="10.800" cy="10.500" r="1" fill="#20a030"/></svg>
<div class="t" style="left:87.5px;top:200px"><span style="letter-spacing:-0.047px">javalimited.sh</span></div>
<div class="vd" style="left:18px;top:216px;height:17px"></div>
<div class="vd" style="left:37px;top:216px;height:17px"></div>
<div class="vd" style="left:56px;top:216px;height:17px"></div>
<div class="hd" style="left:58px;top:224px;width:9px"></div>
<svg class="ic" style="left:67px;top:216px" width="16" height="16" viewBox="0 0 16 16"><path d="M3.5 1.5 H10.5 L13.5 4.5 V14.5 H3.5 Z" fill="#fff" stroke="#8ea0c4"/><path d="M10.5 1.5 V4.5 H13.5 Z" fill="#f0cf7c" stroke="#c8a050" stroke-width=".6"/><path d="M5.5 4.5 H9 M5.5 6.5 H11.5 M5.5 8.5 H11.5 M5.5 10.5 H11.5 M5.5 12.5 H11.5" stroke="#6f8fd0" stroke-width="1"/></svg>
<div class="t" style="left:87.5px;top:217px"><span style="letter-spacing:-0.246px">Makefile</span></div>
<div class="vd" style="left:18px;top:233px;height:17px"></div>
<div class="vd" style="left:37px;top:233px;height:17px"></div>
<div class="vd" style="left:56px;top:233px;height:9px"></div>
<div class="hd" style="left:58px;top:241px;width:9px"></div>
<svg class="ic" style="left:67px;top:233px" width="16" height="16" viewBox="0 0 16 16"><path d="M3.5 1.5 H10.5 L13.5 4.5 V14.5 H3.5 Z" fill="#fff" stroke="#8ea0c4"/><path d="M10.5 1.5 V4.5 H13.5 Z" fill="#f0cf7c" stroke="#c8a050" stroke-width=".6"/><path d="M5.5 4.5 H9 M5.5 6.5 H11.5 M5.5 8.5 H11.5 M5.5 10.5 H11.5 M5.5 12.5 H11.5" stroke="#6f8fd0" stroke-width="1"/></svg>
<div class="t" style="left:87.5px;top:234px"><span style="letter-spacing:0.045px">octmarf</span></div>
<div class="vd" style="left:18px;top:250px;height:17px"></div>
<div class="vd" style="left:37px;top:250px;height:4px"></div>
<div class="vd" style="left:37px;top:264px;height:3px"></div>
<div class="hd" style="left:43px;top:258px;width:5px"></div>
<div class="exp" style="left:33px;top:254px"><i></i><b></b></div>
<svg class="ic" style="left:48px;top:250px" width="16" height="16" viewBox="0 0 16 16"><rect x="3.500" y="3.500" width="10" height="10" fill="#e9bc8e" stroke="#c6782c"/><rect x="4" y="4" width="4" height="4" fill="url(#pg)"/><rect x="9" y="4" width="4" height="4" fill="url(#pg)"/><rect x="4" y="9" width="4" height="4" fill="url(#pg)"/><rect x="9" y="9" width="4" height="4" fill="url(#pg)"/><path d="M8.500 2 V15 M2 8.500 H15" stroke="#94603e" stroke-width="1" fill="none"/><path d="M3.500 7.600 L7.800 15.500" stroke="#fff" stroke-width="1.600" fill="none"/><path d="M3.500 8.600 L.4 14.600 Q.2 15.600 1.200 15.600 L5.800 15.600 Q6.800 15.600 6.600 14.600 Z" fill="#fbd070" stroke="#d8921c" stroke-width=".9"/><rect x="3" y="10.4" width="1" height="3" fill="#3a2a10"/><rect x="3" y="14" width="1" height="1" fill="#3a2a10"/></svg>
<div class="t" style="left:68.5px;top:251px"><span style="letter-spacing:0.188px">marf.</span><span style="letter-spacing:0.013px">apps.</span><span style="letter-spacing:0.312px">oct.</span><span style="letter-spacing:-0.402px">OCTMARF.</span><span style="letter-spacing:-0.038px">framework</span></div>
<div class="vd" style="left:18px;top:267px;height:17px"></div>
<div class="vd" style="left:37px;top:267px;height:4px"></div>
<div class="vd" style="left:37px;top:281px;height:3px"></div>
<div class="hd" style="left:43px;top:275px;width:5px"></div>
<div class="exp" style="left:33px;top:271px"><i></i><b></b></div>
<svg class="ic" style="left:48px;top:267px" width="16" height="16" viewBox="0 0 16 16"><rect x="3.500" y="3.500" width="10" height="10" fill="#e9bc8e" stroke="#c6782c"/><rect x="4" y="4" width="4" height="4" fill="url(#pg)"/><rect x="9" y="4" width="4" height="4" fill="url(#pg)"/><rect x="4" y="9" width="4" height="4" fill="url(#pg)"/><rect x="9" y="9" width="4" height="4" fill="url(#pg)"/><path d="M8.500 2 V15 M2 8.500 H15" stroke="#94603e" stroke-width="1" fill="none"/><path d="M3.500 7.600 L7.800 15.500" stroke="#fff" stroke-width="1.600" fill="none"/><path d="M3.500 8.600 L.4 14.600 Q.2 15.600 1.200 15.600 L5.800 15.600 Q6.800 15.600 6.600 14.600 Z" fill="#fbd070" stroke="#d8921c" stroke-width=".9"/><rect x="3" y="10.4" width="1" height="3" fill="#3a2a10"/><rect x="3" y="14" width="1" height="1" fill="#3a2a10"/></svg>
<div class="t" style="left:68.5px;top:268px"><span style="letter-spacing:0.188px">marf.</span><span style="letter-spacing:0.013px">apps.</span><span style="letter-spacing:0.312px">oct.</span><span style="letter-spacing:-0.402px">OCTMARF.</span><span style="letter-spacing:0.059px">framework.</span><span style="letter-spacing:0.041px">a2.FeatureExtraction</span></div>
<div class="vd" style="left:18px;top:284px;height:17px"></div>
<div class="vd" style="left:37px;top:284px;height:4px"></div>
<div class="vd" style="left:37px;top:298px;height:3px"></div>
<div class="hd" style="left:43px;top:292px;width:5px"></div>
<div class="exp" style="left:33px;top:288px"><i></i><b></b></div>
<svg class="ic" style="left:48px;top:284px" width="16" height="16" viewBox="0 0 16 16"><rect x="3.500" y="3.500" width="10" height="10" fill="#e9bc8e" stroke="#c6782c"/><rect x="4" y="4" width="4" height="4" fill="url(#pg)"/><rect x="9" y="4" width="4" height="4" fill="url(#pg)"/><rect x="4" y="9" width="4" height="4" fill="url(#pg)"/><rect x="9" y="9" width="4" height="4" fill="url(#pg)"/><path d="M8.500 2 V15 M2 8.500 H15" stroke="#94603e" stroke-width="1" fill="none"/></svg>
<div class="t" style="left:68.5px;top:285px"><span style="letter-spacing:0.188px">marf.</span><span style="letter-spacing:0.013px">apps.</span><span style="letter-spacing:0.312px">oct.</span><span style="letter-spacing:-0.402px">OCTMARF.</span><span style="letter-spacing:0.059px">framework.</span><span style="letter-spacing:0.083px">a2.FeatureExtraction.</span><span style="letter-spacing:-0.055px">Features</span></div>
<div class="vd" style="left:18px;top:301px;height:17px"></div>
<div class="vd" style="left:37px;top:301px;height:4px"></div>
<div class="vd" style="left:37px;top:315px;height:3px"></div>
<div class="hd" style="left:43px;top:309px;width:5px"></div>
<div class="exp" style="left:33px;top:305px"><i></i></div>
<svg class="ic" style="left:48px;top:301px" width="16" height="16" viewBox="0 0 16 16"><rect x="3.500" y="3.500" width="10" height="10" fill="#e9bc8e" stroke="#c6782c"/><rect x="4" y="4" width="4" height="4" fill="url(#pg)"/><rect x="9" y="4" width="4" height="4" fill="url(#pg)"/><rect x="4" y="9" width="4" height="4" fill="url(#pg)"/><rect x="9" y="9" width="4" height="4" fill="url(#pg)"/><path d="M8.500 2 V15 M2 8.500 H15" stroke="#94603e" stroke-width="1" fill="none"/><path d="M3.500 7.600 L7.800 15.500" stroke="#fff" stroke-width="1.600" fill="none"/><path d="M3.500 8.600 L.4 14.600 Q.2 15.600 1.200 15.600 L5.800 15.600 Q6.800 15.600 6.600 14.600 Z" fill="#fbd070" stroke="#d8921c" stroke-width=".9"/><rect x="3" y="10.4" width="1" height="3" fill="#3a2a10"/><rect x="3" y="14" width="1" height="1" fill="#3a2a10"/></svg>
<div class="t" style="left:68.5px;top:302px"><span style="letter-spacing:0.188px">marf.</span><span style="letter-spacing:0.013px">apps.</span><span style="letter-spacing:0.312px">oct.</span><span style="letter-spacing:-0.402px">OCTMARF.</span><span style="letter-spacing:0.059px">framework.</span><span style="letter-spacing:0.119px">a2.Pattern</span></div>
<div class="vd" style="left:18px;top:318px;height:17px"></div>
<div class="vd" style="left:37px;top:318px;height:17px"></div>
<div class="vd" style="left:56px;top:318px;height:4px"></div>
<div class="vd" style="left:56px;top:332px;height:3px"></div>
<div class="hd" style="left:62px;top:326px;width:5px"></div>
<div class="exp" style="left:52px;top:322px"><i></i><b></b></div>
<svg class="ic" style="left:67px;top:318px" width="16" height="16" viewBox="0 0 16 16"><path d="M3.5 1.5 H10.5 L13.5 4.5 V14.5 H3.5 Z" fill="#fff" stroke="#b9902f"/><path d="M4.5 2.5 H10 L12.5 5 V13.5 H4.5 Z" fill="#e4ecf8"/><path d="M10.5 1.5 V4.5 H13.5" fill="#f6e3a8" stroke="#b9902f"/><text x="5.7" y="12" font-family="Liberation Sans, sans-serif" font-weight="bold" font-size="9.8" fill="#2a5fa8">J</text><path d="M3.500 7.600 L7.800 15.500" stroke="#fff" stroke-width="1.600" fill="none"/><path d="M3.500 8.600 L.4 14.600 Q.2 15.600 1.200 15.600 L5.800 15.600 Q6.800 15.600 6.600 14.600 Z" fill="#fbd070" stroke="#d8921c" stroke-width=".9"/><rect x="3" y="10.4" width="1" height="3" fill="#3a2a10"/><rect x="3" y="14" width="1" height="1" fill="#3a2a10"/></svg>
<div class="t" style="left:87.5px;top:319px"><span style="letter-spacing:0.18px">Pattern.</span><span style="letter-spacing:0.203px">java</span></div>
<div class="vd" style="left:18px;top:335px;height:17px"></div>
<div class="vd" style="left:37px;top:335px;height:17px"></div>
<div class="vd" style="left:56px;top:335px;height:4px"></div>
<div class="vd" style="left:56px;top:349px;height:3px"></div>
<div class="hd" style="left:62px;top:343px;width:5px"></div>
<div class="exp" style="left:52px;top:339px"><i></i><b></b></div>
<svg class="ic" style="left:67px;top:335px" width="16" height="16" viewBox="0 0 16 16"><path d="M3.5 1.5 H10.5 L13.5 4.5 V14.5 H3.5 Z" fill="#fff" stroke="#b9902f"/><path d="M4.5 2.5 H10 L12.5 5 V13.5 H4.5 Z" fill="#e4ecf8"/><path d="M10.5 1.5 V4.5 H13.5" fill="#f6e3a8" stroke="#b9902f"/><text x="5.7" y="12" font-family="Liberation Sans, sans-serif" font-weight="bold" font-size="9.8" fill="#2a5fa8">J</text></svg>
<div class="t" style="left:87.5px;top:336px"><span style="letter-spacing:-0.044px">PatternSerializer.</span><span style="letter-spacing:0.203px">java</span></div>
<div class="vd" style="left:18px;top:352px;height:17px"></div>
<div class="vd" style="left:37px;top:352px;height:17px"></div>
<div class="vd" style="left:56px;top:352px;height:4px"></div>
<div class="hd" style="left:62px;top:360px;width:5px"></div>
<div class="exp" style="left:52px;top:356px"><i></i><b></b></div>
<svg class="ic" style="left:67px;top:352px" width="16" height="16" viewBox="0 0 16 16"><path d="M3.5 1.5 H10.5 L13.5 4.5 V14.5 H3.5 Z" fill="#fff" stroke="#b9902f"/><path d="M4.5 2.5 H10 L12.5 5 V13.5 H4.5 Z" fill="#e4ecf8"/><path d="M10.5 1.5 V4.5 H13.5" fill="#f6e3a8" stroke="#b9902f"/><text x="5.7" y="12" font-family="Liberation Sans, sans-serif" font-weight="bold" font-size="9.8" fill="#2a5fa8">J</text></svg>
<div class="t" style="left:87.5px;top:353px"><span style="letter-spacing:-0.152px">ScanWindow.</span><span style="letter-spacing:0.203px">java</span></div>
<div class="vd" style="left:18px;top:369px;height:17px"></div>
<div class="vd" style="left:37px;top:369px;height:4px"></div>
<div class="vd" style="left:37px;top:383px;height:3px"></div>
<div class="hd" style="left:43px;top:377px;width:5px"></div>
<div class="exp" style="left:33px;top:373px"><i></i><b></b></div>
<svg class="ic" style="left:48px;top:369px" width="16" height="16" viewBox="0 0 16 16"><rect x="3.500" y="3.500" width="10" height="10" fill="#e9bc8e" stroke="#c6782c"/><rect x="4" y="4" width="4" height="4" fill="url(#pg)"/><rect x="9" y="4" width="4" height="4" fill="url(#pg)"/><rect x="4" y="9" width="4" height="4" fill="url(#pg)"/><rect x="9" y="9" width="4" height="4" fill="url(#pg)"/><path d="M8.500 2 V15 M2 8.500 H15" stroke="#94603e" stroke-width="1" fill="none"/><path d="M3.500 7.600 L7.800 15.500" stroke="#fff" stroke-width="1.600" fill="none"/><path d="M3.500 8.600 L.4 14.600 Q.2 15.600 1.200 15.600 L5.800 15.600 Q6.800 15.600 6.600 14.600 Z" fill="#fbd070" stroke="#d8921c" stroke-width=".9"/><rect x="3" y="10.4" width="1" height="3" fill="#3a2a10"/><rect x="3" y="14" width="1" height="1" fill="#3a2a10"/></svg>
<div class="t" style="left:68.5px;top:370px"><span style="letter-spacing:0.188px">marf.</span><span style="letter-spacing:0.013px">apps.</span><span style="letter-spacing:0.312px">oct.</span><span style="letter-spacing:-0.402px">OCTMARF.</span><span style="letter-spacing:0.059px">framework.</span><span style="letter-spacing:-0.101px">a2.Preprocessing.</span><span style="letter-spacing:-0.084px">Contouring</span></div>
<div class="vd" style="left:18px;top:386px;height:17px"></div>
<div class="vd" style="left:37px;top:386px;height:4px"></div>
<div class="vd" style="left:37px;top:400px;height:3px"></div>
<div class="hd" style="left:43px;top:394px;width:5px"></div>
<div class="exp" style="left:33px;top:390px"><i></i><b></b></div>
<svg class="ic" style="left:48px;top:386px" width="16" height="16" viewBox="0 0 16 16"><rect x="3.500" y="3.500" width="10" height="10" fill="#e9bc8e" stroke="#c6782c"/><rect x="4" y="4" width="4" height="4" fill="url(#pg)"/><rect x="9" y="4" width="4" height="4" fill="url(#pg)"/><rect x="4" y="9" width="4" height="4" fill="url(#pg)"/><rect x="9" y="9" width="4" height="4" fill="url(#pg)"/><path d="M8.500 2 V15 M2 8.500 H15" stroke="#94603e" stroke-width="1" fill="none"/><path d="M3.500 7.600 L7.800 15.500" stroke="#fff" stroke-width="1.600" fill="none"/><path d="M3.500 8.600 L.4 14.600 Q.2 15.600 1.200 15.600 L5.800 15.600 Q6.800 15.600 6.600 14.600 Z" fill="#fbd070" stroke="#d8921c" stroke-width=".9"/><rect x="3" y="10.4" width="1" height="3" fill="#3a2a10"/><rect x="3" y="14" width="1" height="1" fill="#3a2a10"/></svg>
<div class="t" style="left:68.5px;top:387px"><span style="letter-spacing:0.188px">marf.</span><span style="letter-spacing:0.013px">apps.</span><span style="letter-spacing:0.312px">oct.</span><span style="letter-spacing:-0.402px">OCTMARF.</span><span style="letter-spacing:0.059px">framework.</span><span style="letter-spacing:-0.101px">a2.Preprocessing.</span><span style="letter-spacing:-0.267px">Skeletonizing</span></div>
<div class="vd" style="left:18px;top:403px;height:17px"></div>
<div class="vd" style="left:37px;top:403px;height:4px"></div>
<div class="vd" style="left:37px;top:417px;height:3px"></div>
<div class="hd" style="left:43px;top:411px;width:5px"></div>
<div class="exp" style="left:33px;top:407px"><i></i><b></b></div>
<svg class="ic" style="left:48px;top:403px" width="16" height="16" viewBox="0 0 16 16"><rect x="3.500" y="3.500" width="10" height="10" fill="#e9bc8e" stroke="#c6782c"/><rect x="4" y="4" width="4" height="4" fill="url(#pg)"/><rect x="9" y="4" width="4" height="4" fill="url(#pg)"/><rect x="4" y="9" width="4" height="4" fill="url(#pg)"/><rect x="9" y="9" width="4" height="4" fill="url(#pg)"/><path d="M8.500 2 V15 M2 8.500 H15" stroke="#94603e" stroke-width="1" fill="none"/><path d="M3.500 7.600 L7.800 15.500" stroke="#fff" stroke-width="1.600" fill="none"/><path d="M3.500 8.600 L.4 14.600 Q.2 15.600 1.200 15.600 L5.800 15.600 Q6.800 15.600 6.600 14.600 Z" fill="#fbd070" stroke="#d8921c" stroke-width=".9"/><rect x="3" y="10.4" width="1" height="3" fill="#3a2a10"/><rect x="3" y="14" width="1" height="1" fill="#3a2a10"/></svg>
<div class="t" style="left:68.5px;top:404px"><span style="letter-spacing:0.188px">marf.</span><span style="letter-spacing:0.013px">apps.</span><span style="letter-spacing:0.312px">oct.</span><span style="letter-spacing:-0.402px">OCTMARF.</span><span style="letter-spacing:0.059px">framework.</span><span style="letter-spacing:-0.101px">a2.Preprocessing.</span><span style="letter-spacing:-0.292px">Smoothing</span></div>
<div class="vd" style="left:18px;top:420px;height:17px"></div>
<div class="vd" style="left:37px;top:420px;height:4px"></div>
<div class="vd" style="left:37px;top:434px;height:3px"></div>
<div class="hd" style="left:43px;top:428px;width:5px"></div>
<div class="exp" style="left:33px;top:424px"><i></i></div>
<svg class="ic" style="left:48px;top:420px" width="16" height="16" viewBox="0 0 16 16"><rect x="3.500" y="3.500" width="10" height="10" fill="#e9bc8e" stroke="#c6782c"/><rect x="4" y="4" width="4" height="4" fill="url(#pg)"/><rect x="9" y="4" width="4" height="4" fill="url(#pg)"/><rect x="4" y="9" width="4" height="4" fill="url(#pg)"/><rect x="9" y="9" width="4" height="4" fill="url(#pg)"/><path d="M8.500 2 V15 M2 8.500 H15" stroke="#94603e" stroke-width="1" fill="none"/></svg>
<div class="t" style="left:68.5px;top:421px"><span style="letter-spacing:0.188px">marf.</span><span style="letter-spacing:0.013px">apps.</span><span style="letter-spacing:0.312px">oct.</span><span style="letter-spacing:-0.402px">OCTMARF.</span><span style="letter-spacing:0.059px">framework.</span><span style="letter-spacing:0.08px">detectors</span></div>
<div class="vd" style="left:18px;top:437px;height:17px"></div>
<div class="vd" style="left:37px;top:437px;height:17px"></div>
<div class="vd" style="left:56px;top:437px;height:4px"></div>
<div class="vd" style="left:56px;top:451px;height:3px"></div>
<div class="hd" style="left:62px;top:445px;width:5px"></div>
<div class="exp" style="left:52px;top:441px"><i></i><b></b></div>
<svg class="ic" style="left:67px;top:437px" width="16" height="16" viewBox="0 0 16 16"><path d="M3.5 1.5 H10.5 L13.5 4.5 V14.5 H3.5 Z" fill="#fff" stroke="#b9902f"/><path d="M4.5 2.5 H10 L12.5 5 V13.5 H4.5 Z" fill="#e4ecf8"/><path d="M10.5 1.5 V4.5 H13.5" fill="#f6e3a8" stroke="#b9902f"/><text x="5.7" y="12" font-family="Liberation Sans, sans-serif" font-weight="bold" font-size="9.8" fill="#2a5fa8">J</text></svg>
<div class="t" style="left:87.5px;top:438px"><span style="letter-spacing:0.217px">Detector.</span><span style="letter-spacing:0.203px">java</span></div>
<div class="vd" style="left:18px;top:454px;height:17px"></div>
<div class="vd" style="left:37px;top:454px;height:17px"></div>
<div class="vd" style="left:56px;top:454px;height:4px"></div>
<div class="hd" style="left:62px;top:462px;width:5px"></div>
<div class="exp" style="left:52px;top:458px"><i></i><b></b></div>
<svg class="ic" style="left:67px;top:454px" width="16" height="16" viewBox="0 0 16 16"><path d="M3.5 1.5 H10.5 L13.5 4.5 V14.5 H3.5 Z" fill="#fff" stroke="#b9902f"/><path d="M4.5 2.5 H10 L12.5 5 V13.5 H4.5 Z" fill="#e4ecf8"/><path d="M10.5 1.5 V4.5 H13.5" fill="#f6e3a8" stroke="#b9902f"/><text x="5.7" y="12" font-family="Liberation Sans, sans-serif" font-weight="bold" font-size="9.8" fill="#2a5fa8">J</text></svg>
<div class="t" style="left:87.5px;top:455px"><span style="letter-spacing:0.289px">IDetector.</span><span style="letter-spacing:0.203px">java</span></div>
<div class="vd" style="left:18px;top:471px;height:17px"></div>
<div class="vd" style="left:37px;top:471px;height:4px"></div>
<div class="vd" style="left:37px;top:485px;height:3px"></div>
<div class="hd" style="left:43px;top:479px;width:5px"></div>
<div class="exp" style="left:33px;top:475px"><i></i></div>
<svg class="ic" style="left:48px;top:471px" width="16" height="16" viewBox="0 0 16 16"><rect x="3.500" y="3.500" width="10" height="10" fill="#e9bc8e" stroke="#c6782c"/><rect x="4" y="4" width="4" height="4" fill="url(#pg)"/><rect x="9" y="4" width="4" height="4" fill="url(#pg)"/><rect x="4" y="9" width="4" height="4" fill="url(#pg)"/><rect x="9" y="9" width="4" height="4" fill="url(#pg)"/><path d="M8.500 2 V15 M2 8.500 H15" stroke="#94603e" stroke-width="1" fill="none"/></svg>
<div class="t" style="left:68.5px;top:472px"><span style="letter-spacing:0.188px">marf.</span><span style="letter-spacing:0.013px">apps.</span><span style="letter-spacing:0.312px">oct.</span><span style="letter-spacing:-0.402px">OCTMARF.</span><span style="letter-spacing:0.059px">framework.</span><span style="letter-spacing:0.024px">detectors.ILM</span></div>
<div class="vd" style="left:18px;top:488px;height:17px"></div>
<div class="vd" style="left:37px;top:488px;height:17px"></div>
<div class="vd" style="left:56px;top:488px;height:4px"></div>
<div class="hd" style="left:62px;top:496px;width:5px"></div>
<div class="exp" style="left:52px;top:492px"><i></i><b></b></div>
<svg class="ic" style="left:67px;top:488px" width="16" height="16" viewBox="0 0 16 16"><path d="M3.5 1.5 H10.5 L13.5 4.5 V14.5 H3.5 Z" fill="#fff" stroke="#b9902f"/><path d="M4.5 2.5 H10 L12.5 5 V13.5 H4.5 Z" fill="#e4ecf8"/><path d="M10.5 1.5 V4.5 H13.5" fill="#f6e3a8" stroke="#b9902f"/><text x="5.7" y="12" font-family="Liberation Sans, sans-serif" font-weight="bold" font-size="9.8" fill="#2a5fa8">J</text></svg>
<div class="t" style="left:87.5px;top:489px"><span style="letter-spacing:-0.028px">FabritiusILMDetector.</span><span style="letter-spacing:0.203px">java</span></div>
<div class="vd" style="left:18px;top:505px;height:17px"></div>
<div class="vd" style="left:37px;top:505px;height:4px"></div>
<div class="vd" style="left:37px;top:519px;height:3px"></div>
<div class="hd" style="left:43px;top:513px;width:5px"></div>
<div class="exp" style="left:33px;top:509px"><i></i></div>
<svg class="ic" style="left:48px;top:505px" width="16" height="16" viewBox="0 0 16 16"><rect x="3.500" y="3.500" width="10" height="10" fill="#e9bc8e" stroke="#c6782c"/><rect x="4" y="4" width="4" height="4" fill="url(#pg)"/><rect x="9" y="4" width="4" height="4" fill="url(#pg)"/><rect x="4" y="9" width="4" height="4" fill="url(#pg)"/><rect x="9" y="9" width="4" height="4" fill="url(#pg)"/><path d="M8.500 2 V15 M2 8.500 H15" stroke="#94603e" stroke-width="1" fill="none"/></svg>
<div class="t" style="left:68.5px;top:506px"><span style="letter-spacing:0.188px">marf.</span><span style="letter-spacing:0.013px">apps.</span><span style="letter-spacing:0.312px">oct.</span><span style="letter-spacing:-0.402px">OCTMARF.</span><span style="letter-spacing:0.059px">framework.</span><span style="letter-spacing:-0.163px">preprocessing</span></div>
<div class="vd" style="left:18px;top:522px;height:17px"></div>
<div class="vd" style="left:37px;top:522px;height:17px"></div>
<div class="vd" style="left:56px;top:522px;height:4px"></div>
<div class="vd" style="left:56px;top:536px;height:3px"></div>
<div class="hd" style="left:62px;top:530px;width:5px"></div>
<div class="exp" style="left:52px;top:526px"><i></i><b></b></div>
<svg class="ic" style="left:67px;top:522px" width="16" height="16" viewBox="0 0 16 16"><path d="M3.5 1.5 H10.5 L13.5 4.5 V14.5 H3.5 Z" fill="#fff" stroke="#b9902f"/><path d="M4.5 2.5 H10 L12.5 5 V13.5 H4.5 Z" fill="#e4ecf8"/><path d="M10.5 1.5 V4.5 H13.5" fill="#f6e3a8" stroke="#b9902f"/><text x="5.7" y="12" font-family="Liberation Sans, sans-serif" font-weight="bold" font-size="9.8" fill="#2a5fa8">J</text></svg>
<div class="t" style="left:87.5px;top:523px"><span style="letter-spacing:-0.086px">Binarizer.</span><span style="letter-spacing:0.203px">java</span></div>
<div class="vd" style="left:18px;top:539px;height:17px"></div>
<div class="vd" style="left:37px;top:539px;height:17px"></div>
<div class="vd" style="left:56px;top:539px;height:4px"></div>
<div class="vd" style="left:56px;top:553px;height:3px"></div>
<div class="hd" style="left:62px;top:547px;width:5px"></div>
<div class="exp" style="left:52px;top:543px"><i></i><b></b></div>
<svg class="ic" style="left:67px;top:539px" width="16" height="16" viewBox="0 0 16 16"><path d="M3.5 1.5 H10.5 L13.5 4.5 V14.5 H3.5 Z" fill="#fff" stroke="#b9902f"/><path d="M4.5 2.5 H10 L12.5 5 V13.5 H4.5 Z" fill="#e4ecf8"/><path d="M10.5 1.5 V4.5 H13.5" fill="#f6e3a8" stroke="#b9902f"/><text x="5.7" y="12" font-family="Liberation Sans, sans-serif" font-weight="bold" font-size="9.8" fill="#2a5fa8">J</text></svg>
<div class="t" style="left:87.5px;top:540px"><span style="letter-spacing:0.003px">IPreprocessor.</span><span style="letter-spacing:0.203px">java</span></div>
<div class="vd" style="left:18px;top:556px;height:17px"></div>
<div class="vd" style="left:37px;top:556px;height:17px"></div>
<div class="vd" style="left:56px;top:556px;height:4px"></div>
<div class="hd" style="left:62px;top:564px;width:5px"></div>
<div class="exp" style="left:52px;top:560px"><i></i><b></b></div>
<svg class="ic" style="left:67px;top:556px" width="16" height="16" viewBox="0 0 16 16"><path d="M3.5 1.5 H10.5 L13.5 4.5 V14.5 H3.5 Z" fill="#fff" stroke="#b9902f"/><path d="M4.5 2.5 H10 L12.5 5 V13.5 H4.5 Z" fill="#e4ecf8"/><path d="M10.5 1.5 V4.5 H13.5" fill="#f6e3a8" stroke="#b9902f"/><text x="5.7" y="12" font-family="Liberation Sans, sans-serif" font-weight="bold" font-size="9.8" fill="#2a5fa8">J</text></svg>
<div class="t" style="left:87.5px;top:557px"><span style="letter-spacing:-0.069px">Preprocessor.</span><span style="letter-spacing:0.203px">java</span></div>
<div class="vd" style="left:18px;top:573px;height:17px"></div>
<div class="vd" style="left:37px;top:573px;height:17px"></div>
<div class="hd" style="left:39px;top:581px;width:9px"></div>
<svg class="ic" style="left:48px;top:573px" width="16" height="16" viewBox="0 0 16 16"><rect x="3.500" y="3.500" width="10" height="10" fill="#fff" stroke="#5a5a5a"/><path d="M8.500 2 V15 M2 8.500 H15" stroke="#5a5a5a" fill="none"/></svg>
<div class="t" style="left:68.5px;top:574px"><span style="letter-spacing:0.188px">marf.</span><span style="letter-spacing:0.013px">apps.</span><span style="letter-spacing:0.312px">oct.</span><span style="letter-spacing:-0.402px">OCTMARF.</span><span style="letter-spacing:0.059px">framework.</span><span style="letter-spacing:-0.085px">preprocessing.</span><span style="letter-spacing:-0.236px">denoising</span></div>
<div class="vd" style="left:18px;top:590px;height:17px"></div>
<div class="vd" style="left:37px;top:590px;height:4px"></div>
<div class="vd" style="left:37px;top:604px;height:3px"></div>
<div class="hd" style="left:43px;top:598px;width:5px"></div>
<div class="exp" style="left:33px;top:594px"><i></i></div>
<svg class="ic" style="left:48px;top:590px" width="16" height="16" viewBox="0 0 16 16"><rect x="3.500" y="3.500" width="10" height="10" fill="#e9bc8e" stroke="#c6782c"/><rect x="4" y="4" width="4" height="4" fill="url(#pg)"/><rect x="9" y="4" width="4" height="4" fill="url(#pg)"/><rect x="4" y="9" width="4" height="4" fill="url(#pg)"/><rect x="9" y="9" width="4" height="4" fill="url(#pg)"/><path d="M8.500 2 V15 M2 8.500 H15" stroke="#94603e" stroke-width="1" fill="none"/></svg>
<div class="t" style="left:68.5px;top:591px"><span style="letter-spacing:0.188px">marf.</span><span style="letter-spacing:0.013px">apps.</span><span style="letter-spacing:0.312px">oct.</span><span style="letter-spacing:-0.402px">OCTMARF.</span><span style="letter-spacing:0.059px">framework.</span><span style="letter-spacing:-0.181px">processors</span></div>
<div class="vd" style="left:18px;top:607px;height:17px"></div>
<div class="vd" style="left:37px;top:607px;height:17px"></div>
<div class="vd" style="left:56px;top:607px;height:4px"></div>
<div class="vd" style="left:56px;top:621px;height:3px"></div>
<div class="hd" style="left:62px;top:615px;width:5px"></div>
<div class="exp" style="left:52px;top:611px"><i></i><b></b></div>
<svg class="ic" style="left:67px;top:607px" width="16" height="16" viewBox="0 0 16 16"><path d="M3.5 1.5 H10.5 L13.5 4.5 V14.5 H3.5 Z" fill="#fff" stroke="#b9902f"/><path d="M4.5 2.5 H10 L12.5 5 V13.5 H4.5 Z" fill="#e4ecf8"/><path d="M10.5 1.5 V4.5 H13.5" fill="#f6e3a8" stroke="#b9902f"/><text x="5.7" y="12" font-family="Liberation Sans, sans-serif" font-weight="bold" font-size="9.8" fill="#2a5fa8">J</text></svg>
<div class="t" style="left:87.5px;top:608px"><span style="letter-spacing:-0.004px">IProcessor.</span><span style="letter-spacing:0.203px">java</span></div>
<div class="vd" style="left:18px;top:624px;height:17px"></div>
<div class="vd" style="left:37px;top:624px;height:17px"></div>
<div class="vd" style="left:56px;top:624px;height:4px"></div>
<div class="hd" style="left:62px;top:632px;width:5px"></div>
<div class="exp" style="left:52px;top:628px"><i></i><b></b></div>
<svg class="ic" style="left:67px;top:624px" width="16" height="16" viewBox="0 0 16 16"><path d="M3.5 1.5 H10.5 L13.5 4.5 V14.5 H3.5 Z" fill="#fff" stroke="#b9902f"/><path d="M4.5 2.5 H10 L12.5 5 V13.5 H4.5 Z" fill="#e4ecf8"/><path d="M10.5 1.5 V4.5 H13.5" fill="#f6e3a8" stroke="#b9902f"/><text x="5.7" y="12" font-family="Liberation Sans, sans-serif" font-weight="bold" font-size="9.8" fill="#2a5fa8">J</text></svg>
<div style="left:86px;top:624px;width:135px;height:17px;background:#d4d0c8"></div>
<div class="t" style="left:87.5px;top:625px"><span style="letter-spacing:-0.143px">ZhangSuenTransform.</span><span style="letter-spacing:0.203px">java</span></div>
<div class="vd" style="left:18px;top:641px;height:17px"></div>
<div class="vd" style="left:37px;top:641px;height:4px"></div>
<div class="vd" style="left:37px;top:655px;height:3px"></div>
<div class="hd" style="left:43px;top:649px;width:5px"></div>
<div class="exp" style="left:33px;top:645px"><i></i><b></b></div>
<svg class="ic" style="left:48px;top:641px" width="16" height="16" viewBox="0 0 16 16"><rect x="3.500" y="3.500" width="10" height="10" fill="#e9bc8e" stroke="#c6782c"/><rect x="4" y="4" width="4" height="4" fill="url(#pg)"/><rect x="9" y="4" width="4" height="4" fill="url(#pg)"/><rect x="4" y="9" width="4" height="4" fill="url(#pg)"/><rect x="9" y="9" width="4" height="4" fill="url(#pg)"/><path d="M8.500 2 V15 M2 8.500 H15" stroke="#94603e" stroke-width="1" fill="none"/><path d="M3.500 7.600 L7.800 15.500" stroke="#fff" stroke-width="1.600" fill="none"/><path d="M3.500 8.600 L.4 14.600 Q.2 15.600 1.200 15.600 L5.800 15.600 Q6.800 15.600 6.600 14.600 Z" fill="#fbd070" stroke="#d8921c" stroke-width=".9"/><rect x="3" y="10.4" width="1" height="3" fill="#3a2a10"/><rect x="3" y="14" width="1" height="1" fill="#3a2a10"/></svg>
<div class="t" style="left:68.5px;top:642px"><span style="letter-spacing:0.188px">marf.</span><span style="letter-spacing:0.013px">apps.</span><span style="letter-spacing:0.312px">oct.</span><span style="letter-spacing:-0.494px">OCTMARF.OCT</span></div>
<div class="vd" style="left:18px;top:658px;height:17px"></div>
<div class="vd" style="left:37px;top:658px;height:17px"></div>
<div class="hd" style="left:39px;top:666px;width:9px"></div>
<svg class="ic" style="left:48px;top:658px" width="16" height="16" viewBox="0 0 16 16"><rect x="3.500" y="3.500" width="10" height="10" fill="#fff" stroke="#5a5a5a"/><path d="M8.500 2 V15 M2 8.500 H15" stroke="#5a5a5a" fill="none"/></svg>
<div class="t" style="left:68.5px;top:659px"><span style="letter-spacing:0.188px">marf.</span><span style="letter-spacing:0.013px">apps.</span><span style="letter-spacing:0.312px">oct.</span><span style="letter-spacing:-0.402px">OCTMARF.</span><span style="letter-spacing:-0.016px">OCT.</span><span style="letter-spacing:-0.147px">heuristics</span></div>
<div class="vd" style="left:18px;top:675px;height:17px"></div>
<div class="vd" style="left:37px;top:675px;height:4px"></div>
<div class="vd" style="left:37px;top:689px;height:3px"></div>
<div class="hd" style="left:43px;top:683px;width:5px"></div>
<div class="exp" style="left:33px;top:679px"><i></i></div>
<svg class="ic" style="left:48px;top:675px" width="16" height="16" viewBox="0 0 16 16"><rect x="3.500" y="3.500" width="10" height="10" fill="#e9bc8e" stroke="#c6782c"/><rect x="4" y="4" width="4" height="4" fill="url(#pg)"/><rect x="9" y="4" width="4" height="4" fill="url(#pg)"/><rect x="4" y="9" width="4" height="4" fill="url(#pg)"/><rect x="9" y="9" width="4" height="4" fill="url(#pg)"/><path d="M8.500 2 V15 M2 8.500 H15" stroke="#94603e" stroke-width="1" fill="none"/><path d="M3.500 7.600 L7.800 15.500" stroke="#fff" stroke-width="1.600" fill="none"/><path d="M3.500 8.600 L.4 14.600 Q.2 15.600 1.200 15.600 L5.800 15.600 Q6.800 15.600 6.600 14.600 Z" fill="#fbd070" stroke="#d8921c" stroke-width=".9"/><rect x="3" y="10.4" width="1" height="3" fill="#3a2a10"/><rect x="3" y="14" width="1" height="1" fill="#3a2a10"/></svg>
<div class="t" style="left:68.5px;top:676px"><span style="letter-spacing:0.188px">marf.</span><span style="letter-spacing:0.013px">apps.</span><span style="letter-spacing:0.312px">oct.</span><span style="letter-spacing:-0.402px">OCTMARF.</span><span style="letter-spacing:-0.08px">Storage</span></div>
<div class="vd" style="left:18px;top:692px;height:17px"></div>
<div class="vd" style="left:37px;top:692px;height:17px"></div>
<div class="vd" style="left:56px;top:692px;height:4px"></div>
<div class="vd" style="left:56px;top:706px;height:3px"></div>
<div class="hd" style="left:62px;top:700px;width:5px"></div>
<div class="exp" style="left:52px;top:696px"><i></i><b></b></div>
<svg class="ic" style="left:67px;top:692px" width="16" height="16" viewBox="0 0 16 16"><path d="M3.5 1.5 H10.5 L13.5 4.5 V14.5 H3.5 Z" fill="#fff" stroke="#b9902f"/><path d="M4.5 2.5 H10 L12.5 5 V13.5 H4.5 Z" fill="#e4ecf8"/><path d="M10.5 1.5 V4.5 H13.5" fill="#f6e3a8" stroke="#b9902f"/><text x="5.7" y="12" font-family="Liberation Sans, sans-serif" font-weight="bold" font-size="9.8" fill="#2a5fa8">J</text></svg>
<div class="t" style="left:87.5px;top:693px"><span style="letter-spacing:-0.011px">AnyToWAVLoader.</span><span style="letter-spacing:0.203px">java</span></div>
<div class="vd" style="left:18px;top:709px;height:17px"></div>
<div class="vd" style="left:37px;top:709px;height:17px"></div>
<div class="vd" style="left:56px;top:709px;height:4px"></div>
<div class="vd" style="left:56px;top:723px;height:3px"></div>
<div class="hd" style="left:62px;top:717px;width:5px"></div>
<div class="exp" style="left:52px;top:713px"><i></i><b></b></div>
<svg class="ic" style="left:67px;top:709px" width="16" height="16" viewBox="0 0 16 16"><path d="M3.5 1.5 H10.5 L13.5 4.5 V14.5 H3.5 Z" fill="#fff" stroke="#b9902f"/><path d="M4.5 2.5 H10 L12.5 5 V13.5 H4.5 Z" fill="#e4ecf8"/><path d="M10.5 1.5 V4.5 H13.5" fill="#f6e3a8" stroke="#b9902f"/><text x="5.7" y="12" font-family="Liberation Sans, sans-serif" font-weight="bold" font-size="9.8" fill="#2a5fa8">J</text><path d="M3.500 7.600 L7.800 15.500" stroke="#fff" stroke-width="1.600" fill="none"/><path d="M3.500 8.600 L.4 14.600 Q.2 15.600 1.200 15.600 L5.800 15.600 Q6.800 15.600 6.600 14.600 Z" fill="#fbd070" stroke="#d8921c" stroke-width=".9"/><rect x="3" y="10.4" width="1" height="3" fill="#3a2a10"/><rect x="3" y="14" width="1" height="1" fill="#3a2a10"/></svg>
<div class="t" style="left:87.5px;top:710px"><span style="letter-spacing:-0.181px">AScanLoader.</span><span style="letter-spacing:0.203px">java</span></div>
<div class="vd" style="left:18px;top:726px;height:17px"></div>
<div class="vd" style="left:37px;top:726px;height:17px"></div>
<div class="vd" style="left:56px;top:726px;height:4px"></div>
<div class="vd" style="left:56px;top:740px;height:3px"></div>
<div class="hd" style="left:62px;top:734px;width:5px"></div>
<div class="exp" style="left:52px;top:730px"><i></i><b></b></div>
<svg class="ic" style="left:67px;top:726px" width="16" height="16" viewBox="0 0 16 16"><path d="M3.5 1.5 H10.5 L13.5 4.5 V14.5 H3.5 Z" fill="#fff" stroke="#b9902f"/><path d="M4.5 2.5 H10 L12.5 5 V13.5 H4.5 Z" fill="#e4ecf8"/><path d="M10.5 1.5 V4.5 H13.5" fill="#f6e3a8" stroke="#b9902f"/><text x="5.7" y="12" font-family="Liberation Sans, sans-serif" font-weight="bold" font-size="9.8" fill="#2a5fa8">J</text></svg>
<div class="t" style="left:87.5px;top:727px"><span style="letter-spacing:-0.442px">BMPDumper.</span><span style="letter-spacing:0.203px">java</span></div>
<div class="vd" style="left:18px;top:743px;height:17px"></div>
<div class="vd" style="left:37px;top:743px;height:17px"></div>
<div class="vd" style="left:56px;top:743px;height:4px"></div>
<div class="vd" style="left:56px;top:757px;height:3px"></div>
<div class="hd" style="left:62px;top:751px;width:5px"></div>
<div class="exp" style="left:52px;top:747px"><i></i><b></b></div>
<svg class="ic" style="left:67px;top:743px" width="16" height="16" viewBox="0 0 16 16"><path d="M3.5 1.5 H10.5 L13.5 4.5 V14.5 H3.5 Z" fill="#fff" stroke="#b9902f"/><path d="M4.5 2.5 H10 L12.5 5 V13.5 H4.5 Z" fill="#e4ecf8"/><path d="M10.5 1.5 V4.5 H13.5" fill="#f6e3a8" stroke="#b9902f"/><text x="5.7" y="12" font-family="Liberation Sans, sans-serif" font-weight="bold" font-size="9.8" fill="#2a5fa8">J</text><path d="M3.500 7.600 L7.800 15.500" stroke="#fff" stroke-width="1.600" fill="none"/><path d="M3.500 8.600 L.4 14.600 Q.2 15.600 1.200 15.600 L5.800 15.600 Q6.800 15.600 6.600 14.600 Z" fill="#fbd070" stroke="#d8921c" stroke-width=".9"/><rect x="3" y="10.4" width="1" height="3" fill="#3a2a10"/><rect x="3" y="14" width="1" height="1" fill="#3a2a10"/></svg>
<div class="t" style="left:87.5px;top:744px"><span style="letter-spacing:-0.021px">FileItem.</span><span style="letter-spacing:0.203px">java</span></div>
<div class="vd" style="left:18px;top:760px;height:17px"></div>
<div class="vd" style="left:37px;top:760px;height:17px"></div>
<div class="vd" style="left:56px;top:760px;height:4px"></div>
<div class="vd" style="left:56px;top:774px;height:3px"></div>
<div class="hd" style="left:62px;top:768px;width:5px"></div>
<div class="exp" style="left:52px;top:764px"><i></i><b></b></div>
<svg class="ic" style="left:67px;top:760px" width="16" height="16" viewBox="0 0 16 16"><path d="M3.5 1.5 H10.5 L13.5 4.5 V14.5 H3.5 Z" fill="#fff" stroke="#b9902f"/><path d="M4.5 2.5 H10 L12.5 5 V13.5 H4.5 Z" fill="#e4ecf8"/><path d="M10.5 1.5 V4.5 H13.5" fill="#f6e3a8" stroke="#b9902f"/><text x="5.7" y="12" font-family="Liberation Sans, sans-serif" font-weight="bold" font-size="9.8" fill="#2a5fa8">J</text><path d="M3.500 7.600 L7.800 15.500" stroke="#fff" stroke-width="1.600" fill="none"/><path d="M3.500 8.600 L.4 14.600 Q.2 15.600 1.200 15.600 L5.800 15.600 Q6.800 15.600 6.600 14.600 Z" fill="#fbd070" stroke="#d8921c" stroke-width=".9"/><rect x="3" y="10.4" width="1" height="3" fill="#3a2a10"/><rect x="3" y="14" width="1" height="1" fill="#3a2a10"/></svg>
<div class="t" style="left:87.5px;top:761px"><span style="letter-spacing:-0.303px">GenericMetaXMLLoader.</span><span style="letter-spacing:0.203px">java</span></div>
<div class="vd" style="left:18px;top:777px;height:17px"></div>
<div class="vd" style="left:37px;top:777px;height:17px"></div>
<div class="vd" style="left:56px;top:777px;height:4px"></div>
<div class="vd" style="left:56px;top:791px;height:3px"></div>
<div class="hd" style="left:62px;top:785px;width:5px"></div>
<div class="exp" style="left:52px;top:781px"><i></i><b></b></div>
<svg class="ic" style="left:67px;top:777px" width="16" height="16" viewBox="0 0 16 16"><path d="M3.5 1.5 H10.5 L13.5 4.5 V14.5 H3.5 Z" fill="#fff" stroke="#b9902f"/><path d="M4.5 2.5 H10 L12.5 5 V13.5 H4.5 Z" fill="#e4ecf8"/><path d="M10.5 1.5 V4.5 H13.5" fill="#f6e3a8" stroke="#b9902f"/><text x="5.7" y="12" font-family="Liberation Sans, sans-serif" font-weight="bold" font-size="9.8" fill="#2a5fa8">J</text></svg>
<div class="t" style="left:87.5px;top:778px"><span style="letter-spacing:-0.442px">PPMDumper.</span><span style="letter-spacing:0.203px">java</span></div>
<div class="vd" style="left:18px;top:794px;height:17px"></div>
<div class="vd" style="left:37px;top:794px;height:17px"></div>
<div class="vd" style="left:56px;top:794px;height:4px"></div>
<div class="vd" style="left:56px;top:808px;height:3px"></div>
<div class="hd" style="left:62px;top:802px;width:5px"></div>
<div class="exp" style="left:52px;top:798px"><i></i><b></b></div>
<svg class="ic" style="left:67px;top:794px" width="16" height="16" viewBox="0 0 16 16"><path d="M3.5 1.5 H10.5 L13.5 4.5 V14.5 H3.5 Z" fill="#fff" stroke="#b9902f"/><path d="M4.5 2.5 H10 L12.5 5 V13.5 H4.5 Z" fill="#e4ecf8"/><path d="M10.5 1.5 V4.5 H13.5" fill="#f6e3a8" stroke="#b9902f"/><text x="5.7" y="12" font-family="Liberation Sans, sans-serif" font-weight="bold" font-size="9.8" fill="#2a5fa8">J</text></svg>
<div class="t" style="left:87.5px;top:795px"><span style="letter-spacing:-0.253px">RawSampleLoader.</span><span style="letter-spacing:0.203px">java</span></div>
<div class="vd" style="left:18px;top:811px;height:17px"></div>
<div class="vd" style="left:37px;top:811px;height:17px"></div>
<div class="vd" style="left:56px;top:811px;height:4px"></div>
<div class="hd" style="left:62px;top:819px;width:5px"></div>
<div class="exp" style="left:52px;top:815px"><i></i><b></b></div>
<svg class="ic" style="left:67px;top:811px" width="16" height="16" viewBox="0 0 16 16"><path d="M3.5 1.5 H10.5 L13.5 4.5 V14.5 H3.5 Z" fill="#fff" stroke="#b9902f"/><path d="M4.5 2.5 H10 L12.5 5 V13.5 H4.5 Z" fill="#e4ecf8"/><path d="M10.5 1.5 V4.5 H13.5" fill="#f6e3a8" stroke="#b9902f"/><text x="5.7" y="12" font-family="Liberation Sans, sans-serif" font-weight="bold" font-size="9.8" fill="#2a5fa8">J</text></svg>
<div class="t" style="left:87.5px;top:812px"><span style="letter-spacing:-0.252px">Volume.</span><span style="letter-spacing:0.203px">java</span></div>
<div class="vd" style="left:18px;top:828px;height:17px"></div>
<div class="vd" style="left:37px;top:828px;height:4px"></div>
<div class="vd" style="left:37px;top:842px;height:3px"></div>
<div class="hd" style="left:43px;top:836px;width:5px"></div>
<div class="exp" style="left:33px;top:832px"><i></i><b></b></div>
<svg class="ic" style="left:48px;top:828px" width="16" height="16" viewBox="0 0 16 16"><rect x="2.500" y="3.500" width="10" height="10" fill="#eaf0fb" stroke="#6e6e6e"/><path d="M7.500 2 V15 M1 8.500 H14" stroke="#6e6e6e" fill="none"/><path d="M7.500 13.500 V9.500 H9.500 L10.500 7.500 H13.500 V9.500 H14.500 L15.800 11 L14.500 13.500 Z" fill="#fff" stroke="#5e5e5e"/><path d="M9 11.500 H14.500" stroke="#8a8a8a"/></svg>
<div class="t" style="left:68.5px;top:829px"><span style="letter-spacing:-0.146px">resources</span></div>
<div class="vd" style="left:18px;top:845px;height:17px"></div>
<div class="vd" style="left:37px;top:845px;height:4px"></div>
<div class="vd" style="left:37px;top:859px;height:3px"></div>
<div class="hd" style="left:43px;top:853px;width:5px"></div>
<div class="exp" style="left:33px;top:849px"><i></i><b></b></div>
<svg class="ic" style="left:48px;top:845px" width="16" height="16" viewBox="0 0 16 16"><rect x="2.500" y="3.500" width="10" height="10" fill="#eaf0fb" stroke="#6e6e6e"/><path d="M7.500 2 V15 M1 8.500 H14" stroke="#6e6e6e" fill="none"/><path d="M7.500 13.500 V9.500 H9.500 L10.500 7.500 H13.500 V9.500 H14.500 L15.800 11 L14.500 13.500 Z" fill="#fff" stroke="#5e5e5e"/><path d="M9 11.500 H14.500" stroke="#8a8a8a"/></svg>
<div class="t" style="left:68.5px;top:846px"><span style="letter-spacing:-0.037px">resources.</span><span style="letter-spacing:0.141px">data</span></div>
<div class="vd" style="left:18px;top:862px;height:17px"></div>
<div class="vd" style="left:37px;top:862px;height:4px"></div>
<div class="vd" style="left:37px;top:876px;height:3px"></div>
<div class="hd" style="left:43px;top:870px;width:5px"></div>
<div class="exp" style="left:33px;top:866px"><i></i><b></b></div>
<svg class="ic" style="left:48px;top:862px" width="16" height="16" viewBox="0 0 16 16"><rect x="2.500" y="3.500" width="10" height="10" fill="#eaf0fb" stroke="#6e6e6e"/><path d="M7.500 2 V15 M1 8.500 H14" stroke="#6e6e6e" fill="none"/><path d="M7.500 13.500 V9.500 H9.500 L10.500 7.500 H13.500 V9.500 H14.500 L15.800 11 L14.500 13.500 Z" fill="#fff" stroke="#5e5e5e"/><path d="M9 11.500 H14.500" stroke="#8a8a8a"/></svg>
<div class="t" style="left:68.5px;top:863px"><span style="letter-spacing:-0.037px">resources.</span><span style="letter-spacing:-0.17px">pic.pic</span></div>
<div class="vd" style="left:18px;top:879px;height:17px"></div>
<div class="vd" style="left:37px;top:879px;height:4px"></div>
<div class="vd" style="left:37px;top:893px;height:3px"></div>
<div class="hd" style="left:43px;top:887px;width:5px"></div>
<div class="exp" style="left:33px;top:883px"><i></i><b></b></div>
<svg class="ic" style="left:48px;top:879px" width="16" height="16" viewBox="0 0 16 16"><rect x="2.500" y="3.500" width="10" height="10" fill="#eaf0fb" stroke="#6e6e6e"/><path d="M7.500 2 V15 M1 8.500 H14" stroke="#6e6e6e" fill="none"/><path d="M7.500 13.500 V9.500 H9.500 L10.500 7.500 H13.500 V9.500 H14.500 L15.800 11 L14.500 13.500 Z" fill="#fff" stroke="#5e5e5e"/><path d="M9 11.500 H14.500" stroke="#8a8a8a"/></svg>
<div class="t" style="left:68.5px;top:880px"><span style="letter-spacing:-0.037px">resources.</span><span style="letter-spacing:0.023px">wavelets</span></div>
<div class="vd" style="left:18px;top:896px;height:17px"></div>
<div class="vd" style="left:37px;top:896px;height:4px"></div>
<div class="vd" style="left:37px;top:910px;height:3px"></div>
<div class="hd" style="left:43px;top:904px;width:5px"></div>
<div class="exp" style="left:33px;top:900px"><i></i><b></b></div>
<svg class="ic" style="left:48px;top:896px" width="16" height="16" viewBox="0 0 16 16"><rect x="2.500" y="3.500" width="10" height="10" fill="#eaf0fb" stroke="#6e6e6e"/><path d="M7.500 2 V15 M1 8.500 H14" stroke="#6e6e6e" fill="none"/><path d="M7.500 13.500 V9.500 H9.500 L10.500 7.500 H13.500 V9.500 H14.500 L15.800 11 L14.500 13.500 Z" fill="#fff" stroke="#5e5e5e"/><path d="M9 11.500 H14.500" stroke="#8a8a8a"/></svg>
<div class="t" style="left:68.5px;top:897px"><span style="letter-spacing:-0.037px">resources.</span><span style="letter-spacing:0.125px">wavelets.</span><span style="letter-spacing:0.02px">WaveletSofware</span></div>
<div class="vd" style="left:18px;top:913px;height:17px"></div>
<div class="vd" style="left:37px;top:913px;height:4px"></div>
<div class="vd" style="left:37px;top:927px;height:3px"></div>
<div class="hd" style="left:43px;top:921px;width:5px"></div>
<div class="exp" style="left:33px;top:917px"><i></i><b></b></div>
<svg class="ic" style="left:48px;top:913px" width="16" height="16" viewBox="0 0 16 16"><rect x="2.500" y="3.500" width="10" height="10" fill="#eaf0fb" stroke="#6e6e6e"/><path d="M7.500 2 V15 M1 8.500 H14" stroke="#6e6e6e" fill="none"/><path d="M7.500 13.500 V9.500 H9.500 L10.500 7.500 H13.500 V9.500 H14.500 L15.800 11 L14.500 13.500 Z" fill="#fff" stroke="#5e5e5e"/><path d="M9 11.500 H14.500" stroke="#8a8a8a"/></svg>
<div class="t" style="left:68.5px;top:914px"><span style="letter-spacing:-0.037px">resources.</span><span style="letter-spacing:0.125px">wavelets.</span><span style="letter-spacing:0.081px">WaveletSofware.</span><span style="letter-spacing:-0.211px">denoise_</span><span style="letter-spacing:-0.113px">files</span></div>
<div class="vd" style="left:18px;top:930px;height:17px"></div>
<div class="vd" style="left:37px;top:930px;height:4px"></div>
<div class="vd" style="left:37px;top:944px;height:3px"></div>
<div class="hd" style="left:43px;top:938px;width:5px"></div>
<div class="exp" style="left:33px;top:934px"><i></i><b></b></div>
<svg class="ic" style="left:48px;top:930px" width="16" height="16" viewBox="0 0 16 16"><rect x="2.500" y="3.500" width="10" height="10" fill="#eaf0fb" stroke="#6e6e6e"/><path d="M7.500 2 V15 M1 8.500 H14" stroke="#6e6e6e" fill="none"/><path d="M7.500 13.500 V9.500 H9.500 L10.500 7.500 H13.500 V9.500 H14.500 L15.800 11 L14.500 13.500 Z" fill="#fff" stroke="#5e5e5e"/><path d="M9 11.500 H14.500" stroke="#8a8a8a"/></svg>
<div class="t" style="left:68.5px;top:931px"><span style="letter-spacing:-0.037px">resources.</span><span style="letter-spacing:0.125px">wavelets.</span><span style="letter-spacing:0.081px">WaveletSofware.</span><span style="letter-spacing:-0.201px">denoise2_</span><span style="letter-spacing:-0.113px">files</span></div>
<div class="vd" style="left:18px;top:947px;height:17px"></div>
<div class="vd" style="left:37px;top:947px;height:4px"></div>
<div class="vd" style="left:37px;top:961px;height:3px"></div>
<div class="hd" style="left:43px;top:955px;width:5px"></div>
<div class="exp" style="left:33px;top:951px"><i></i><b></b></div>
<svg class="ic" style="left:48px;top:947px" width="16" height="16" viewBox="0 0 16 16"><rect x="2.500" y="3.500" width="10" height="10" fill="#eaf0fb" stroke="#6e6e6e"/><path d="M7.500 2 V15 M1 8.500 H14" stroke="#6e6e6e" fill="none"/><path d="M7.500 13.500 V9.500 H9.500 L10.500 7.500 H13.500 V9.500 H14.500 L15.800 11 L14.500 13.500 Z" fill="#fff" stroke="#5e5e5e"/><path d="M9 11.500 H14.500" stroke="#8a8a8a"/></svg>
<div class="t" style="left:68.5px;top:948px"><span style="letter-spacing:-0.037px">resources.</span><span style="letter-spacing:0.125px">wavelets.</span><span style="letter-spacing:0.081px">WaveletSofware.</span><span style="letter-spacing:-0.075px">dt1D_</span><span style="letter-spacing:-0.113px">files</span></div>
<div class="vd" style="left:18px;top:964px;height:17px"></div>
<div class="vd" style="left:37px;top:964px;height:4px"></div>
<div class="vd" style="left:37px;top:978px;height:3px"></div>
<div class="hd" style="left:43px;top:972px;width:5px"></div>
<div class="exp" style="left:33px;top:968px"><i></i><b></b></div>
<svg class="ic" style="left:48px;top:964px" width="16" height="16" viewBox="0 0 16 16"><rect x="2.500" y="3.500" width="10" height="10" fill="#eaf0fb" stroke="#6e6e6e"/><path d="M7.500 2 V15 M1 8.500 H14" stroke="#6e6e6e" fill="none"/><path d="M7.500 13.500 V9.500 H9.500 L10.500 7.500 H13.500 V9.500 H14.500 L15.800 11 L14.500 13.500 Z" fill="#fff" stroke="#5e5e5e"/><path d="M9 11.500 H14.500" stroke="#8a8a8a"/></svg>
<div class="t" style="left:68.5px;top:965px"><span style="letter-spacing:-0.037px">resources.</span><span style="letter-spacing:0.125px">wavelets.</span><span style="letter-spacing:0.081px">WaveletSofware.</span><span style="letter-spacing:-0.011px">references_</span><span style="letter-spacing:-0.113px">files</span></div>
<div class="vd" style="left:18px;top:981px;height:17px"></div>
<div class="vd" style="left:37px;top:981px;height:4px"></div>
<div class="vd" style="left:37px;top:995px;height:3px"></div>
<div class="hd" style="left:43px;top:989px;width:5px"></div>
<div class="exp" style="left:33px;top:985px"><i></i><b></b></div>
<svg class="ic" style="left:48px;top:981px" width="16" height="16" viewBox="0 0 16 16"><rect x="2.500" y="3.500" width="10" height="10" fill="#eaf0fb" stroke="#6e6e6e"/><path d="M7.500 2 V15 M1 8.500 H14" stroke="#6e6e6e" fill="none"/><path d="M7.500 13.500 V9.500 H9.500 L10.500 7.500 H13.500 V9.500 H14.500 L15.800 11 L14.500 13.500 Z" fill="#fff" stroke="#5e5e5e"/><path d="M9 11.500 H14.500" stroke="#8a8a8a"/></svg>
<div class="t" style="left:68.5px;top:982px"><span style="letter-spacing:-0.037px">resources.</span><span style="letter-spacing:0.125px">wavelets.</span><span style="letter-spacing:0.081px">WaveletSofware.</span><span style="letter-spacing:-0.094px">standard1D_</span><span style="letter-spacing:-0.113px">files</span></div>
<div class="vd" style="left:18px;top:998px;height:17px"></div>
<div class="vd" style="left:37px;top:998px;height:4px"></div>
<div class="vd" style="left:37px;top:1012px;height:3px"></div>
<div class="hd" style="left:43px;top:1006px;width:5px"></div>
<div class="exp" style="left:33px;top:1002px"><i></i><b></b></div>
<svg class="ic" style="left:49px;top:998px" width="16" height="16" viewBox="0 0 16 16"><rect x="1.500" y="3.500" width="7" height="2.600" fill="#3a6ab0" stroke="#284a80" stroke-width=".6"/><rect x=".8" y="6.400" width="9" height="3" fill="#3a9a6a" stroke="#206844" stroke-width=".6"/><rect x=".5" y="9.800" width="10.500" height="4" fill="#d8703a" stroke="#a04818" stroke-width=".6"/><path d="M11.500 1 L9.500 9 L11.500 9.500 L12.200 6 L13.500 13.500 L15.500 13 Z" fill="#f4b428" stroke="#c88810" stroke-width=".6"/></svg>
<div class="t" style="left:68.5px;top:999px"><span style="letter-spacing:-0.711px">JRE </span><span style="letter-spacing:-0.25px">System </span><span style="letter-spacing:-0.089px">Library</span><span class="q"><span style="letter-spacing:0.353px"> [jre1.</span><span style="letter-spacing:0.179px">6.0_03]</span></span></div>
<div class="vd" style="left:18px;top:1015px;height:17px"></div>
<div class="vd" style="left:37px;top:1015px;height:17px"></div>
<div class="hd" style="left:39px;top:1023px;width:9px"></div>
<svg class="ic" style="left:48px;top:1015px" width="16" height="16" viewBox="0 0 16 16"><path d="M3.5 1.5 H10.5 L13.5 4.5 V14.5 H3.5 Z" fill="#fff" stroke="#8ea0c4"/><path d="M10.5 1.5 V4.5 H13.5 Z" fill="#f0cf7c" stroke="#c8a050" stroke-width=".6"/><path d="M5.5 4.5 H9 M5.5 6.5 H11.5 M5.5 8.5 H11.5 M5.5 10.5 H11.5 M5.5 12.5 H11.5" stroke="#6f8fd0" stroke-width="1"/></svg>
<div class="t" style="left:68.5px;top:1016px"><span style="letter-spacing:0.51px">01.txt</span></div>
<div class="vd" style="left:18px;top:1032px;height:17px"></div>
<div class="vd" style="left:37px;top:1032px;height:17px"></div>
<div class="hd" style="left:39px;top:1040px;width:9px"></div>
<svg class="ic" style="left:48px;top:1032px" width="16" height="16" viewBox="0 0 16 16"><path d="M.5 .5 H11 L14.500 4 V15.500 H.5 Z" fill="#fff" stroke="#555"/><path d="M11 .5 V4 H14.500" fill="#fff" stroke="#222"/><path d="M1 15.500 H14.500 V4" stroke="#111" fill="none"/><circle cx="7.300" cy="8.600" r="3.300" fill="none" stroke="#2a7ae0" stroke-width="1.700"/><rect x="5" y="8" width="6" height="1.300" fill="#2a7ae0"/><rect x="8.300" y="9.400" width="3" height="1.600" fill="#fff"/><path d="M2.800 11.800 Q7 3.500 12.500 5" stroke="#f0b020" stroke-width="1.100" fill="none"/></svg>
<div class="t" style="left:68.5px;top:1033px"><span style="letter-spacing:0.177px">0111..ppm</span></div>
<div class="vd" style="left:18px;top:1049px;height:17px"></div>
<div class="vd" style="left:37px;top:1049px;height:17px"></div>
<div class="hd" style="left:39px;top:1057px;width:9px"></div>
<svg class="ic" style="left:48px;top:1049px" width="16" height="16" viewBox="0 0 16 16"><path d="M.5 .5 H11 L14.500 4 V15.500 H.5 Z" fill="#fff" stroke="#555"/><path d="M11 .5 V4 H14.500" fill="#fff" stroke="#222"/><path d="M1 15.500 H14.500 V4" stroke="#111" fill="none"/><circle cx="7.300" cy="8.600" r="3.300" fill="none" stroke="#2a7ae0" stroke-width="1.700"/><rect x="5" y="8" width="6" height="1.300" fill="#2a7ae0"/><rect x="8.300" y="9.400" width="3" height="1.600" fill="#fff"/><path d="M2.800 11.800 Q7 3.500 12.500 5" stroke="#f0b020" stroke-width="1.100" fill="none"/></svg>
<div class="t" style="left:68.5px;top:1050px"><span style="letter-spacing:-0.12px">58.ppm</span></div>
<div class="vd" style="left:18px;top:1066px;height:17px"></div>
<div class="vd" style="left:37px;top:1066px;height:17px"></div>
<div class="hd" style="left:39px;top:1074px;width:9px"></div>
<svg class="ic" style="left:48px;top:1066px" width="16" height="16" viewBox="0 0 16 16"><rect x="1" y="1" width="14" height="14" rx="1" fill="#fdfdf0" stroke="#8a7e1a" stroke-width="2"/><text x="4.300" y="13" font-family="Liberation Serif, serif" font-style="italic" font-weight="bold" font-size="13" fill="#7a6e12">T</text></svg>
<div class="t" style="left:68.5px;top:1067px"><span style="letter-spacing:-0.13px">commands.tex</span></div>
<div class="vd" style="left:18px;top:1083px;height:17px"></div>
<div class="vd" style="left:37px;top:1083px;height:17px"></div>
<div class="hd" style="left:39px;top:1091px;width:9px"></div>
<svg class="ic" style="left:49px;top:1083px" width="16" height="16" viewBox="0 0 16 16"><path d="M2.500 2.500 H13.500 V10.500 L8 13.500 L2.500 10.500 Z" fill="#c4c4c4" stroke="#222"/><path d="M4.500 4 L11.500 4 L8 9.500 Z" fill="#9a9a9a"/><path d="M6 2.800 L8.500 .5 L10.500 2.500 L8 5 Z" fill="#e020c0" stroke="#111" stroke-width=".6"/><path d="M1 11.500 L3.500 10 L5 12.500 L2.500 14.500 Z" fill="#20d0e0" stroke="#111" stroke-width=".6"/><path d="M11 12.500 L12.800 10 L15.200 11.500 L13.500 14.500 Z" fill="#f0e020" stroke="#111" stroke-width=".6"/><path d="M3 14.500 H13" stroke="#111"/></svg>
<div class="t" style="left:68.5px;top:1084px"><span style="letter-spacing:-0.076px">easychair.cls</span></div>
<div class="vd" style="left:18px;top:1100px;height:17px"></div>
<div class="vd" style="left:37px;top:1100px;height:17px"></div>
<div class="hd" style="left:39px;top:1108px;width:9px"></div>
<svg class="ic" style="left:48px;top:1100px" width="16" height="16" viewBox="0 0 16 16"><path d="M3.500 .8 H11 L14.500 4.200 V15.500 H3.500 Z" fill="#fff" stroke="#b8b8b8"/><path d="M11 .8 V4.200 H14.500 Z" fill="#ddd" stroke="#aaa" stroke-width=".6"/><rect x="0" y="2" width="9.500" height="3.600" fill="#e01818"/><path d="M4.500 14 Q8 9 8 6.500 Q8 5.800 7.400 6.600 Q7.800 10 13.500 12 Q10 11 4.200 12.800" stroke="#d82020" stroke-width="1" fill="none"/><path d="M4 15.500 H14.500" stroke="#888"/></svg>
<div class="t" style="left:68.5px;top:1101px"><span style="letter-spacing:-0.012px">InvitationofResearchInternTraineeVisitingScientist.pdf</span></div>
<div class="vd" style="left:18px;top:1117px;height:17px"></div>
<div class="vd" style="left:37px;top:1117px;height:17px"></div>
<div class="hd" style="left:39px;top:1125px;width:9px"></div>
<svg class="ic" style="left:48px;top:1117px" width="16" height="16" viewBox="0 0 16 16"><path d="M3.5 1.5 H10.5 L13.5 4.5 V14.5 H3.5 Z" fill="#fff" stroke="#8ea0c4"/><path d="M10.5 1.5 V4.5 H13.5 Z" fill="#f0cf7c" stroke="#c8a050" stroke-width=".6"/><path d="M5.5 4.5 H9 M5.5 6.5 H11.5 M5.5 8.5 H11.5 M5.5 10.5 H11.5 M5.5 12.5 H11.5" stroke="#6f8fd0" stroke-width="1"/></svg>
<div class="t" style="left:68.5px;top:1118px"><span style="letter-spacing:-0.246px">Makefile</span></div>
<div class="vd" style="left:18px;top:1134px;height:3px"></div>
<div class="vd" style="left:37px;top:1134px;height:3px"></div>
<div style="left:49px;top:1135px;width:9px;height:3px;border:1px solid #c8b040;border-bottom:0;background:#fbe8a0;border-radius:2px 0 0 0"></div>
<div style="left:54px;top:1134px;width:10px;height:4px;border:1px solid #1010e8;border-bottom:0;background:#fff"></div><div style="left:57px;top:1136px;width:4px;height:1px;background:#1010e8"></div></div>
<div class="sbtrack" style="left:422px;top:97px;width:16px;height:1040px"></div><div class="sbb" style="left:422px;top:97px"><svg width="12" height="12" viewBox="2 2 12 12" style="position:absolute;left:0;top:0"><path d="M4.5 9.5 L8 6 L11.5 9.5 Z" fill="#000"/></svg></div><div class="sbb" style="left:422px;top:1121px"><svg width="12" height="12" viewBox="2 2 12 12" style="position:absolute;left:0;top:0"><path d="M4.5 6.5 L8 10 L11.5 6.5 Z" fill="#000"/></svg></div><div class="sbt" style="left:422px;top:189px;width:12px;height:306px"></div>
<div style="left:0;top:0;z-index:2"><svg class="ic" style="left:11px;top:75px" width="11" height="15" viewBox="0 0 11 15"><path d="M1.500 1 V14 M2 4.500 H5 M2 10.500 H5" stroke="#6a7898" fill="none"/><rect x="5" y="2" width="5" height="5" fill="#c8761c"/><rect x="6" y="3" width="1" height="1" fill="#fff4b8"/><rect x="8" y="3" width="1" height="1" fill="#fff4b8"/><rect x="6" y="5" width="1" height="1" fill="#fff4b8"/><rect x="8" y="5" width="1" height="1" fill="#fff4b8"/><rect x="5" y="8" width="5" height="5" fill="#c8761c"/><rect x="6" y="9" width="1" height="1" fill="#fff4b8"/><rect x="8" y="9" width="1" height="1" fill="#fff4b8"/><rect x="6" y="11" width="1" height="1" fill="#fff4b8"/><rect x="8" y="11" width="1" height="1" fill="#fff4b8"/></svg><div class="t" style="left:27px;top:76px;z-index:2"><span style="letter-spacing:-0.363px">Package </span><span style="letter-spacing:-0.121px">Explorer</span></div><svg class="ic" style="left:118px;top:78px" width="11" height="11" viewBox="0 0 11 11"><path d="M1.500 1 H3.500 L5.500 3.200 L7.500 1 H9.500 V2.500 L7.300 5 L9.500 7.500 V9.500 H7.500 L5.500 7.200 L3.500 9.500 H1.500 V7.500 L3.700 5 L1.500 2.500 Z" fill="#fff" stroke="#000" stroke-width="1"/></svg><svg class="ic" style="left:156px;top:75px" width="14" height="17" viewBox="0 0 14 17"><path d="M3.500 5 V15.500 M3.500 7.500 H6 M3.500 13.500 H6" stroke="#5a6a9a" fill="none"/><circle cx="3.500" cy="2.500" r="2.300" fill="#62b862" stroke="#2f8f3c" stroke-width=".9"/><circle cx="8.500" cy="7.500" r="2.300" fill="#62b862" stroke="#2f8f3c" stroke-width=".9"/><circle cx="8.500" cy="13.500" r="2.300" fill="#62b862" stroke="#2f8f3c" stroke-width=".9"/></svg><div class="t" style="left:173.5px;top:76px;z-index:2"><span style="letter-spacing:-0.118px">Hierarchy</span></div><svg class="ic" style="left:341px;top:76px" width="14" height="14" viewBox="0 0 14 14"><rect x=".5" y=".5" width="9" height="9" fill="#e4ecfa" stroke="#b4c4e4"/><rect x="2.500" y="2.500" width="10" height="10" fill="#fff" stroke="#8aa4dc"/><path d="M4.500 7.500 H10.500" stroke="#14408a" stroke-width="1.400"/></svg><svg class="ic" style="left:363px;top:74px" width="16" height="17" viewBox="0 0 16 17"><path d="M1 4.500 L5 1 V3 H11 V6 H5 V8 Z" fill="#fbe090" stroke="#d8941a" stroke-width=".9"/><path d="M15.500 11.500 L11.500 8 V10 H4 V13 H11.500 V15 Z" fill="#fbe090" stroke="#d8941a" stroke-width=".9"/></svg><svg class="ic" style="left:386px;top:76px" width="11" height="6" viewBox="0 0 11 6"><path d="M.8 .6 H10.200 L5.500 5.300 Z" fill="#fff" stroke="#000" stroke-width="1"/></svg><div style="left:405px;top:76px;width:10px;height:4px;border:1px solid #404040;background:#fff;box-shadow:0 0 0 1px rgba(255,255,255,.35)"></div><div style="left:423px;top:76px;width:10px;height:10px;border:1px solid #404040;background:#fff;box-shadow:0 0 0 1px rgba(255,255,255,.35)"><div style="left:0;top:1px;width:8px;height:1px;background:#404040"></div></div></div>
<div style="left:447px;top:97px;width:854px;height:722px;background:#fff;overflow:hidden"></div>
<div style="left:447px;top:97px;width:12px;height:722px;background-color:#fff;background-image:conic-gradient(#0a246a 25%,#fff 0 50%,#0a246a 0 75%,#fff 0);background-size:2px 2px"></div>
<div style="left:447px;top:819px;width:30px;height:16px;background:#d4d0c8"></div>
<div style="left:476px;top:97px;width:1px;height:722px;background:#dddad2"></div>
<div style="left:0;top:97px;width:1301px;height:722px;overflow:hidden"><div style="left:0;top:-97px;width:1301px;height:1000px"><div class="code" style="top:89px">                <span class="c">// single case</span></div>
<div class="code" style="top:106px">                <span class="k">case</span> <span class="sf">OPT_IDENT</span>:</div>
<div class="code" style="top:123px">                <span class="k">case</span> <span class="sf">OPT_BATCH_IDENT</span>:</div>
<div class="code" style="top:140px">                <span class="k">case</span> MARF.NLP.<span class="sf">CLASSIFY</span>:</div>
<div class="code" style="top:157px">                {</div>
<div class="code" style="top:174px">                    ArrayList&lt;Configuration&gt; oConfigs = <span class="k">new</span> ArrayList&lt;Configuration&gt;();</div>
<div class="code" style="top:208px">                    Configuration oConfig = <span class="k">new</span> Configuration();</div>
<div class="code" style="top:225px">                    oConfig.<span class="f">bBinarize</span> = <span class="k">false</span>;</div>
<div class="code" style="top:242px">                    oConfig.<span class="f">bZSCountouring</span> = <span class="k">false</span>;</div>
<div class="code" style="top:259px">                    oConfig.<span class="f">bZSFilling</span> = <span class="k">false</span>;</div>
<div class="code" style="top:276px">                    oConfig.<span class="f">bZSThinning</span> = <span class="k">false</span>;</div>
<div class="code" style="top:293px">                    oConfig.<span class="f">bZSSkeletonizing</span> = <span class="k">true</span>;</div>
<div class="code" style="top:310px">                    oConfig.<span class="f">strFilePrefix</span> = <span class="s">"zsuen-skel"</span>;</div>
<div class="code" style="top:327px">                    oConfig.<span class="f">iRepeat</span> = 1;</div>
<div class="code" style="top:344px">                    oConfigs.add(oConfig);</div>
<div class="code" style="top:378px">                    oConfig = <span class="k">new</span> Configuration();</div>
<div class="code" style="top:395px">                    oConfig.<span class="f">bBinarize</span> = <span class="k">true</span>;</div>
<div class="code" style="top:412px">                    oConfig.<span class="f">bZSCountouring</span> = <span class="k">false</span>;</div>
<div class="code" style="top:429px">                    oConfig.<span class="f">bZSFilling</span> = <span class="k">false</span>;</div>
<div class="code" style="top:446px">                    oConfig.<span class="f">bZSThinning</span> = <span class="k">false</span>;</div>
<div class="code" style="top:463px">                    oConfig.<span class="f">bZSSkeletonizing</span> = <span class="k">false</span>;</div>
<div class="code" style="top:480px">                    oConfig.<span class="f">strFilePrefix</span> = <span class="s">"simple-bin"</span>;</div>
<div class="code" style="top:497px">                    oConfig.<span class="f">iRepeat</span> = 1;</div>
<div class="code" style="top:514px">                    oConfigs.add(oConfig);</div>
<div class="code" style="top:548px">                    oConfig = <span class="k">new</span> Configuration();</div>
<div class="code" style="top:565px">                    oConfig.<span class="f">bBinarize</span> = <span class="k">false</span>;</div>
<div class="code" style="top:582px">                    oConfig.<span class="f">bZSCountouring</span> = <span class="k">true</span>;</div>
<div class="code" style="top:599px">                    oConfig.<span class="f">bZSFilling</span> = <span class="k">true</span>;</div>
<div class="code" style="top:616px">                    oConfig.<span class="f">bZSThinning</span> = <span class="k">true</span>;</div>
<div class="code" style="top:633px">                    oConfig.<span class="f">bZSSkeletonizing</span> = <span class="k">false</span>;</div>
<div class="code" style="top:650px">                    oConfig.<span class="f">strFilePrefix</span> = <span class="s">"zsuen-ftc"</span>;</div>
<div class="code" style="top:667px">                    oConfig.<span class="f">iRepeat</span> = 1;</div>
<div class="code" style="top:684px">                    oConfigs.add(oConfig);</div>
<div class="code" style="top:718px">                    oConfig = <span class="k">new</span> Configuration();</div>
<div class="code" style="top:735px">                    oConfig.<span class="f">bBinarize</span> = <span class="k">false</span>;</div>
<div class="code" style="top:752px">                    oConfig.<span class="f">bZSCountouring</span> = <span class="k">false</span>;</div>
<div class="code" style="top:769px">                    oConfig.<span class="f">bZSFilling</span> = <span class="k">true</span>;</div>
<div class="code" style="top:786px">                    oConfig.<span class="f">bZSThinning</span> = <span class="k">true</span>;</div>
<div class="code" style="top:803px">                    oConfig.<span class="f">bZSSkeletonizing</span> = <span class="k">true</span>;</div></div></div>
<div class="sbtrack" style="left:1301px;top:97px;width:16px;height:722px"></div><div class="sbb" style="left:1301px;top:97px"><svg width="12" height="12" viewBox="2 2 12 12" style="position:absolute;left:0;top:0"><path d="M4.5 9.5 L8 6 L11.5 9.5 Z" fill="#000"/></svg></div><div class="sbb" style="left:1301px;top:803px"><svg width="12" height="12" viewBox="2 2 12 12" style="position:absolute;left:0;top:0"><path d="M4.5 6.5 L8 10 L11.5 6.5 Z" fill="#000"/></svg></div><div class="sbt" style="left:1301px;top:362px;width:12px;height:19px"></div>
<div class="sbtrack" style="left:477px;top:819px;width:824px;height:16px"></div><div class="sbb" style="left:477px;top:819px"><svg width="12" height="12" viewBox="2 2 12 12" style="position:absolute;left:0;top:0"><path d="M9.5 4.5 L6 8 L9.5 11.5 Z" fill="#000"/></svg></div><div class="sbb" style="left:1285px;top:819px"><svg width="12" height="12" viewBox="2 2 12 12" style="position:absolute;left:0;top:0"><path d="M6.5 4.5 L10 8 L6.5 11.5 Z" fill="#000"/></svg></div><div class="sbt" style="left:493px;top:819px;width:640px;height:12px"></div>
<div style="left:1301px;top:819px;width:29px;height:16px;background:#d4d0c8"></div>
<div style="left:1317px;top:97px;width:13px;height:722px;background:#d4d0c8"></div>
<div style="left:1319px;top:352px;width:9px;height:5px;border:1px solid #3a8ae8;background:#8cc0f4"></div>
<div style="left:1319px;top:491px;width:9px;height:5px;border:1px solid #3a8ae8;background:#8cc0f4"></div>
<div style="left:0;top:0;z-index:2"><svg class="ic" style="left:448px;top:75px" width="16" height="16" viewBox="0 0 16 16"><path d="M3.5 1.5 H10.5 L13.5 4.5 V14.5 H3.5 Z" fill="#fff" stroke="#b9902f"/><path d="M4.5 2.5 H10 L12.5 5 V13.5 H4.5 Z" fill="#e4ecf8"/><path d="M10.5 1.5 V4.5 H13.5" fill="#f6e3a8" stroke="#b9902f"/><text x="5.7" y="12" font-family="Liberation Sans, sans-serif" font-weight="bold" font-size="9.8" fill="#2a5fa8">J</text></svg><div class="t" style="left:467px;top:76px"><span style="letter-spacing:-0.252px">Volume.</span><span style="letter-spacing:0.203px">java</span></div><svg class="ic" style="left:558px;top:75px" width="16" height="16" viewBox="0 0 16 16"><path d="M3.5 1.5 H10.5 L13.5 4.5 V14.5 H3.5 Z" fill="#fff" stroke="#b9902f"/><path d="M4.5 2.5 H10 L12.5 5 V13.5 H4.5 Z" fill="#e4ecf8"/><path d="M10.5 1.5 V4.5 H13.5" fill="#f6e3a8" stroke="#b9902f"/><text x="5.7" y="12" font-family="Liberation Sans, sans-serif" font-weight="bold" font-size="9.8" fill="#2a5fa8">J</text></svg><div class="t" style="left:577px;top:76px"><span style="letter-spacing:-0.108px">ZhangSuenTransform.j</span></div><svg class="ic" style="left:718px;top:75px" width="16" height="16" viewBox="0 0 16 16"><path d="M3.5 1.5 H10.5 L13.5 4.5 V14.5 H3.5 Z" fill="#fff" stroke="#b9902f"/><path d="M4.5 2.5 H10 L12.5 5 V13.5 H4.5 Z" fill="#e4ecf8"/><path d="M10.5 1.5 V4.5 H13.5" fill="#f6e3a8" stroke="#b9902f"/><text x="5.7" y="12" font-family="Liberation Sans, sans-serif" font-weight="bold" font-size="9.8" fill="#2a5fa8">J</text><path d="M3.500 7.600 L7.800 15.500" stroke="#fff" stroke-width="1.600" fill="none"/><path d="M3.500 8.600 L.4 14.600 Q.2 15.600 1.200 15.600 L5.800 15.600 Q6.800 15.600 6.600 14.600 Z" fill="#fbd070" stroke="#d8921c" stroke-width=".9"/><rect x="3" y="10.4" width="1" height="3" fill="#3a2a10"/><rect x="3" y="14" width="1" height="1" fill="#3a2a10"/></svg><div class="t" style="left:737px;top:76px"><span style="letter-spacing:0.18px">Pattern.</span><span style="letter-spacing:0.203px">java</span></div><svg class="ic" style="left:828px;top:75px" width="16" height="16" viewBox="0 0 16 16"><path d="M3.5 1.5 H10.5 L13.5 4.5 V14.5 H3.5 Z" fill="#fff" stroke="#b9902f"/><path d="M4.5 2.5 H10 L12.5 5 V13.5 H4.5 Z" fill="#e4ecf8"/><path d="M10.5 1.5 V4.5 H13.5" fill="#f6e3a8" stroke="#b9902f"/><text x="5.7" y="12" font-family="Liberation Sans, sans-serif" font-weight="bold" font-size="9.8" fill="#2a5fa8">J</text></svg><div class="t" style="left:847.5px;top:76px"><span style="letter-spacing:-0.402px">OCTMARFApp.</span><span style="letter-spacing:0.203px">java</span></div><svg class="ic" style="left:985px;top:75px" width="16" height="16" viewBox="0 0 16 16"><path d="M3.5 1.5 H10.5 L13.5 4.5 V14.5 H3.5 Z" fill="#fff" stroke="#b9902f"/><path d="M4.5 2.5 H10 L12.5 5 V13.5 H4.5 Z" fill="#e4ecf8"/><path d="M10.5 1.5 V4.5 H13.5" fill="#f6e3a8" stroke="#b9902f"/><text x="5.7" y="12" font-family="Liberation Sans, sans-serif" font-weight="bold" font-size="9.8" fill="#2a5fa8">J</text></svg><div class="t" style="left:1003px;top:76px"><span style="letter-spacing:-0.086px">Binarizer.</span><span style="letter-spacing:0.203px">java</span></div><svg class="ic" style="left:1101px;top:75px" width="16" height="16" viewBox="0 0 16 16"><path d="M3.5 1.5 H10.5 L13.5 4.5 V14.5 H3.5 Z" fill="#fff" stroke="#b9902f"/><path d="M4.5 2.5 H10 L12.5 5 V13.5 H4.5 Z" fill="#e4ecf8"/><path d="M10.5 1.5 V4.5 H13.5" fill="#f6e3a8" stroke="#b9902f"/><text x="5.7" y="12" font-family="Liberation Sans, sans-serif" font-weight="bold" font-size="9.8" fill="#2a5fa8">J</text></svg><div class="t" style="left:1119px;top:76px"><span style="letter-spacing:-0.069px">Preprocessor.</span><span style="letter-spacing:0.203px">java</span></div><svg class="ic" style="left:948px;top:78px" width="11" height="11" viewBox="0 0 11 11"><path d="M1.500 1 H3.500 L5.500 3.200 L7.500 1 H9.500 V2.500 L7.300 5 L9.500 7.500 V9.500 H7.500 L5.500 7.200 L3.500 9.500 H1.500 V7.500 L3.700 5 L1.500 2.500 Z" fill="#fff" stroke="#000" stroke-width="1"/></svg><div class="t" style="left:1238px;top:70px;font-size:12px;font-weight:bold;letter-spacing:-1px">»</div><div class="t" style="left:1245px;top:76px;font-size:10px">10</div><div style="left:1298px;top:76px;width:10px;height:4px;border:1px solid #404040;background:#fff;box-shadow:0 0 0 1px rgba(255,255,255,.35)"></div><div style="left:1315px;top:76px;width:10px;height:10px;border:1px solid #404040;background:#fff;box-shadow:0 0 0 1px rgba(255,255,255,.35)"><div style="left:0;top:1px;width:8px;height:1px;background:#404040"></div></div></div>
<div style="left:1339px;top:121px;width:238px;height:698px;overflow:hidden;background:#fff">
<div class="vd" style="left:39px;top:0px;height:17px"></div>
<div class="vd" style="left:39px;top:17px;height:17px"></div>
<div class="vd" style="left:39px;top:34px;height:17px"></div>
<div class="vd" style="left:39px;top:51px;height:17px"></div>
<div class="vd" style="left:39px;top:68px;height:17px"></div>
<div class="vd" style="left:39px;top:85px;height:17px"></div>
<div class="vd" style="left:39px;top:102px;height:17px"></div>
<div class="vd" style="left:39px;top:119px;height:17px"></div>
<div class="vd" style="left:39px;top:136px;height:17px"></div>
<div class="vd" style="left:39px;top:153px;height:17px"></div>
<div class="vd" style="left:39px;top:170px;height:17px"></div>
<div class="vd" style="left:39px;top:187px;height:17px"></div>
<div class="vd" style="left:39px;top:204px;height:17px"></div>
<div class="vd" style="left:39px;top:221px;height:17px"></div>
<div class="vd" style="left:39px;top:238px;height:17px"></div>
<div class="vd" style="left:39px;top:255px;height:17px"></div>
<div class="vd" style="left:39px;top:272px;height:17px"></div>
<div class="vd" style="left:39px;top:289px;height:17px"></div>
<div class="vd" style="left:39px;top:306px;height:17px"></div>
<div class="vd" style="left:39px;top:323px;height:17px"></div>
<div class="vd" style="left:39px;top:340px;height:17px"></div>
<div class="vd" style="left:39px;top:357px;height:17px"></div>
<div class="vd" style="left:39px;top:374px;height:17px"></div>
<div class="vd" style="left:39px;top:391px;height:17px"></div>
<div class="vd" style="left:39px;top:408px;height:17px"></div>
<div class="vd" style="left:39px;top:425px;height:17px"></div>
<div class="vd" style="left:39px;top:442px;height:17px"></div>
<div class="vd" style="left:39px;top:459px;height:17px"></div>
<div class="vd" style="left:39px;top:476px;height:17px"></div>
<div class="vd" style="left:39px;top:493px;height:17px"></div>
<div class="vd" style="left:39px;top:510px;height:4px"></div>
<div class="vd" style="left:39px;top:524px;height:3px"></div>
<div class="vd" style="left:39px;top:527px;height:17px"></div>
<div class="vd" style="left:64px;top:527px;height:17px"></div>
<div class="vd" style="left:39px;top:544px;height:17px"></div>
<div class="vd" style="left:64px;top:544px;height:17px"></div>
<div class="vd" style="left:39px;top:561px;height:17px"></div>
<div class="vd" style="left:64px;top:561px;height:17px"></div>
<div class="vd" style="left:39px;top:578px;height:17px"></div>
<div class="vd" style="left:64px;top:578px;height:17px"></div>
<div class="vd" style="left:39px;top:595px;height:17px"></div>
<div class="vd" style="left:64px;top:595px;height:17px"></div>
<div class="vd" style="left:39px;top:612px;height:17px"></div>
<div class="vd" style="left:64px;top:612px;height:17px"></div>
<div class="vd" style="left:39px;top:629px;height:17px"></div>
<div class="vd" style="left:64px;top:629px;height:17px"></div>
<div class="vd" style="left:39px;top:646px;height:17px"></div>
<div class="vd" style="left:64px;top:646px;height:17px"></div>
<div class="vd" style="left:39px;top:663px;height:17px"></div>
<div class="vd" style="left:64px;top:663px;height:9px"></div>
<div class="vd" style="left:39px;top:680px;height:17px"></div>
<div class="vd" style="left:39px;top:697px;height:17px"></div>
<div class="hd" style="left:41px;top:8px;width:12px"></div>
<svg class="ic" style="left:58px;top:5px" width="7" height="7" viewBox="0 0 7 7"><circle cx="3.500" cy="3.500" r="2.500" fill="#fff" stroke="#1c944a" stroke-width="1.700"/></svg>
<div class="t" style="left:63px;top:-1px;font-size:10px;font-weight:bold;line-height:10px;height:10px;color:#c4002c;transform:scaleX(.74);transform-origin:0 0;letter-spacing:0">S</div>
<div class="t" style="left:70px;top:-1px;font-size:10px;font-weight:bold;line-height:10px;height:10px;color:#1d5aa6;transform:scaleX(.74);transform-origin:0 0;letter-spacing:0">F</div>
<div class="t" style="left:80px;top:1px"><span style="letter-spacing:-0.688px">OPT_</span><span style="letter-spacing:-0.6px">IDENT</span><span class="q"><span style="letter-spacing:0.198px"> : int</span></span></div>
<div class="hd" style="left:41px;top:25px;width:12px"></div>
<svg class="ic" style="left:58px;top:22px" width="7" height="7" viewBox="0 0 7 7"><circle cx="3.500" cy="3.500" r="2.500" fill="#fff" stroke="#1c944a" stroke-width="1.700"/></svg>
<div class="t" style="left:63px;top:16px;font-size:10px;font-weight:bold;line-height:10px;height:10px;color:#c4002c;transform:scaleX(.74);transform-origin:0 0;letter-spacing:0">S</div>
<div class="t" style="left:70px;top:16px;font-size:10px;font-weight:bold;line-height:10px;height:10px;color:#1d5aa6;transform:scaleX(.74);transform-origin:0 0;letter-spacing:0">F</div>
<div class="t" style="left:80px;top:18px"><span style="letter-spacing:-0.688px">OPT_</span><span style="letter-spacing:-0.569px">STATS</span><span class="q"><span style="letter-spacing:0.198px"> : int</span></span></div>
<div class="hd" style="left:41px;top:42px;width:12px"></div>
<svg class="ic" style="left:58px;top:39px" width="7" height="7" viewBox="0 0 7 7"><circle cx="3.500" cy="3.500" r="2.500" fill="#fff" stroke="#1c944a" stroke-width="1.700"/></svg>
<div class="t" style="left:63px;top:33px;font-size:10px;font-weight:bold;line-height:10px;height:10px;color:#c4002c;transform:scaleX(.74);transform-origin:0 0;letter-spacing:0">S</div>
<div class="t" style="left:70px;top:33px;font-size:10px;font-weight:bold;line-height:10px;height:10px;color:#1d5aa6;transform:scaleX(.74);transform-origin:0 0;letter-spacing:0">F</div>
<div class="t" style="left:80px;top:35px"><span style="letter-spacing:-0.688px">OPT_</span><span style="letter-spacing:-1.137px">RESET</span><span class="q"><span style="letter-spacing:0.198px"> : int</span></span></div>
<div class="hd" style="left:41px;top:59px;width:12px"></div>
<svg class="ic" style="left:58px;top:56px" width="7" height="7" viewBox="0 0 7 7"><circle cx="3.500" cy="3.500" r="2.500" fill="#fff" stroke="#1c944a" stroke-width="1.700"/></svg>
<div class="t" style="left:63px;top:50px;font-size:10px;font-weight:bold;line-height:10px;height:10px;color:#c4002c;transform:scaleX(.74);transform-origin:0 0;letter-spacing:0">S</div>
<div class="t" style="left:70px;top:50px;font-size:10px;font-weight:bold;line-height:10px;height:10px;color:#1d5aa6;transform:scaleX(.74);transform-origin:0 0;letter-spacing:0">F</div>
<div class="t" style="left:80px;top:52px"><span style="letter-spacing:-0.688px">OPT_</span><span style="letter-spacing:-0.79px">VERSION</span><span class="q"><span style="letter-spacing:0.198px"> : int</span></span></div>
<div class="hd" style="left:41px;top:76px;width:12px"></div>
<svg class="ic" style="left:58px;top:73px" width="7" height="7" viewBox="0 0 7 7"><circle cx="3.500" cy="3.500" r="2.500" fill="#fff" stroke="#1c944a" stroke-width="1.700"/></svg>
<div class="t" style="left:63px;top:67px;font-size:10px;font-weight:bold;line-height:10px;height:10px;color:#c4002c;transform:scaleX(.74);transform-origin:0 0;letter-spacing:0">S</div>
<div class="t" style="left:70px;top:67px;font-size:10px;font-weight:bold;line-height:10px;height:10px;color:#1d5aa6;transform:scaleX(.74);transform-origin:0 0;letter-spacing:0">F</div>
<div class="t" style="left:80px;top:69px"><span style="letter-spacing:-0.688px">OPT_</span><span style="letter-spacing:-0.975px">HELP_</span><span style="letter-spacing:-1.047px">LONG</span><span class="q"><span style="letter-spacing:0.198px"> : int</span></span></div>
<div class="hd" style="left:41px;top:93px;width:12px"></div>
<svg class="ic" style="left:58px;top:90px" width="7" height="7" viewBox="0 0 7 7"><circle cx="3.500" cy="3.500" r="2.500" fill="#fff" stroke="#1c944a" stroke-width="1.700"/></svg>
<div class="t" style="left:63px;top:84px;font-size:10px;font-weight:bold;line-height:10px;height:10px;color:#c4002c;transform:scaleX(.74);transform-origin:0 0;letter-spacing:0">S</div>
<div class="t" style="left:70px;top:84px;font-size:10px;font-weight:bold;line-height:10px;height:10px;color:#1d5aa6;transform:scaleX(.74);transform-origin:0 0;letter-spacing:0">F</div>
<div class="t" style="left:80px;top:86px"><span style="letter-spacing:-0.688px">OPT_</span><span style="letter-spacing:-0.975px">HELP_</span><span style="letter-spacing:-0.859px">SHORT</span><span class="q"><span style="letter-spacing:0.198px"> : int</span></span></div>
<div class="hd" style="left:41px;top:110px;width:12px"></div>
<svg class="ic" style="left:58px;top:107px" width="7" height="7" viewBox="0 0 7 7"><circle cx="3.500" cy="3.500" r="2.500" fill="#fff" stroke="#1c944a" stroke-width="1.700"/></svg>
<div class="t" style="left:63px;top:101px;font-size:10px;font-weight:bold;line-height:10px;height:10px;color:#c4002c;transform:scaleX(.74);transform-origin:0 0;letter-spacing:0">S</div>
<div class="t" style="left:70px;top:101px;font-size:10px;font-weight:bold;line-height:10px;height:10px;color:#1d5aa6;transform:scaleX(.74);transform-origin:0 0;letter-spacing:0">F</div>
<div class="t" style="left:80px;top:103px"><span style="letter-spacing:-0.688px">OPT_</span><span style="letter-spacing:-1.225px">DEBUG</span><span class="q"><span style="letter-spacing:0.198px"> : int</span></span></div>
<div class="hd" style="left:41px;top:127px;width:12px"></div>
<svg class="ic" style="left:58px;top:124px" width="7" height="7" viewBox="0 0 7 7"><circle cx="3.500" cy="3.500" r="2.500" fill="#fff" stroke="#1c944a" stroke-width="1.700"/></svg>
<div class="t" style="left:63px;top:118px;font-size:10px;font-weight:bold;line-height:10px;height:10px;color:#c4002c;transform:scaleX(.74);transform-origin:0 0;letter-spacing:0">S</div>
<div class="t" style="left:70px;top:118px;font-size:10px;font-weight:bold;line-height:10px;height:10px;color:#1d5aa6;transform:scaleX(.74);transform-origin:0 0;letter-spacing:0">F</div>
<div class="t" style="left:80px;top:120px"><span style="letter-spacing:-0.688px">OPT_</span><span style="letter-spacing:-1.025px">GRAPH</span><span class="q"><span style="letter-spacing:0.198px"> : int</span></span></div>
<div class="hd" style="left:41px;top:144px;width:12px"></div>
<svg class="ic" style="left:58px;top:141px" width="7" height="7" viewBox="0 0 7 7"><circle cx="3.500" cy="3.500" r="2.500" fill="#fff" stroke="#1c944a" stroke-width="1.700"/></svg>
<div class="t" style="left:63px;top:135px;font-size:10px;font-weight:bold;line-height:10px;height:10px;color:#c4002c;transform:scaleX(.74);transform-origin:0 0;letter-spacing:0">S</div>
<div class="t" style="left:70px;top:135px;font-size:10px;font-weight:bold;line-height:10px;height:10px;color:#1d5aa6;transform:scaleX(.74);transform-origin:0 0;letter-spacing:0">F</div>
<div class="t" style="left:80px;top:137px"><span style="letter-spacing:-0.688px">OPT_</span><span style="letter-spacing:-1.017px">SPECTROGRAM</span><span class="q"><span style="letter-spacing:0.198px"> : int</span></span></div>
<div class="hd" style="left:41px;top:161px;width:12px"></div>
<svg class="ic" style="left:58px;top:158px" width="7" height="7" viewBox="0 0 7 7"><circle cx="3.500" cy="3.500" r="2.500" fill="#fff" stroke="#1c944a" stroke-width="1.700"/></svg>
<div class="t" style="left:63px;top:152px;font-size:10px;font-weight:bold;line-height:10px;height:10px;color:#c4002c;transform:scaleX(.74);transform-origin:0 0;letter-spacing:0">S</div>
<div class="t" style="left:70px;top:152px;font-size:10px;font-weight:bold;line-height:10px;height:10px;color:#1d5aa6;transform:scaleX(.74);transform-origin:0 0;letter-spacing:0">F</div>
<div class="t" style="left:80px;top:154px"><span style="letter-spacing:-0.688px">OPT_</span><span style="letter-spacing:-0.858px">EXPECTED_ID</span><span class="q"><span style="letter-spacing:0.198px"> : int</span></span></div>
<div class="hd" style="left:41px;top:178px;width:12px"></div>
<svg class="ic" style="left:58px;top:175px" width="7" height="7" viewBox="0 0 7 7"><circle cx="3.500" cy="3.500" r="2.500" fill="#fff" stroke="#1c944a" stroke-width="1.700"/></svg>
<div class="t" style="left:63px;top:169px;font-size:10px;font-weight:bold;line-height:10px;height:10px;color:#c4002c;transform:scaleX(.74);transform-origin:0 0;letter-spacing:0">S</div>
<div class="t" style="left:70px;top:169px;font-size:10px;font-weight:bold;line-height:10px;height:10px;color:#1d5aa6;transform:scaleX(.74);transform-origin:0 0;letter-spacing:0">F</div>
<div class="t" style="left:80px;top:171px"><span style="letter-spacing:-0.688px">OPT_</span><span style="letter-spacing:-0.599px">BATCH_</span><span style="letter-spacing:-0.6px">IDENT</span><span class="q"><span style="letter-spacing:0.198px"> : int</span></span></div>
<div class="hd" style="left:41px;top:195px;width:12px"></div>
<svg class="ic" style="left:58px;top:192px" width="7" height="7" viewBox="0 0 7 7"><circle cx="3.500" cy="3.500" r="2.500" fill="#fff" stroke="#1c944a" stroke-width="1.700"/></svg>
<div class="t" style="left:63px;top:186px;font-size:10px;font-weight:bold;line-height:10px;height:10px;color:#c4002c;transform:scaleX(.74);transform-origin:0 0;letter-spacing:0">S</div>
<div class="t" style="left:70px;top:186px;font-size:10px;font-weight:bold;line-height:10px;height:10px;color:#1d5aa6;transform:scaleX(.74);transform-origin:0 0;letter-spacing:0">F</div>
<div class="t" style="left:80px;top:188px"><span style="letter-spacing:-0.688px">OPT_</span><span style="letter-spacing:-0.786px">SINGLE_</span><span style="letter-spacing:-0.4px">TRAIN</span><span class="q"><span style="letter-spacing:0.198px"> : int</span></span></div>
<div class="hd" style="left:41px;top:212px;width:12px"></div>
<svg class="ic" style="left:58px;top:209px" width="7" height="7" viewBox="0 0 7 7"><circle cx="3.500" cy="3.500" r="2.500" fill="#fff" stroke="#1c944a" stroke-width="1.700"/></svg>
<div class="t" style="left:63px;top:203px;font-size:10px;font-weight:bold;line-height:10px;height:10px;color:#c4002c;transform:scaleX(.74);transform-origin:0 0;letter-spacing:0">S</div>
<div class="t" style="left:70px;top:203px;font-size:10px;font-weight:bold;line-height:10px;height:10px;color:#1d5aa6;transform:scaleX(.74);transform-origin:0 0;letter-spacing:0">F</div>
<div class="t" style="left:80px;top:205px"><span style="letter-spacing:-0.688px">OPT_</span><span style="letter-spacing:-0.266px">DIR_</span><span style="letter-spacing:-0.554px">OR_FILE</span><span class="q"><span style="letter-spacing:0.198px"> : int</span></span></div>
<div class="hd" style="left:41px;top:229px;width:12px"></div>
<svg class="ic" style="left:58px;top:226px" width="7" height="7" viewBox="0 0 7 7"><circle cx="3.500" cy="3.500" r="2.500" fill="#fff" stroke="#1c944a" stroke-width="1.700"/></svg>
<div class="t" style="left:63px;top:220px;font-size:10px;font-weight:bold;line-height:10px;height:10px;color:#c4002c;transform:scaleX(.74);transform-origin:0 0;letter-spacing:0">S</div>
<div class="t" style="left:70px;top:220px;font-size:10px;font-weight:bold;line-height:10px;height:10px;color:#1d5aa6;transform:scaleX(.74);transform-origin:0 0;letter-spacing:0">F</div>
<div class="t" style="left:80px;top:222px"><span style="letter-spacing:-0.688px">OPT_</span><span style="letter-spacing:-0.975px">BEST_</span><span style="letter-spacing:-1.025px">SCORE</span><span class="q"><span style="letter-spacing:0.198px"> : int</span></span></div>
<div class="hd" style="left:41px;top:246px;width:12px"></div>
<svg class="ic" style="left:58px;top:243px" width="7" height="7" viewBox="0 0 7 7"><circle cx="3.500" cy="3.500" r="2.500" fill="#fff" stroke="#1c944a" stroke-width="1.700"/></svg>
<div class="t" style="left:63px;top:237px;font-size:10px;font-weight:bold;line-height:10px;height:10px;color:#c4002c;transform:scaleX(.74);transform-origin:0 0;letter-spacing:0">S</div>
<div class="t" style="left:70px;top:237px;font-size:10px;font-weight:bold;line-height:10px;height:10px;color:#1d5aa6;transform:scaleX(.74);transform-origin:0 0;letter-spacing:0">F</div>
<div class="t" style="left:80px;top:239px"><span style="letter-spacing:-0.616px">OPT_GUI</span><span class="q"><span style="letter-spacing:0.198px"> : int</span></span></div>
<div class="hd" style="left:41px;top:263px;width:12px"></div>
<svg class="ic" style="left:58px;top:260px" width="7" height="7" viewBox="0 0 7 7"><circle cx="3.500" cy="3.500" r="2.500" fill="#fff" stroke="#1c944a" stroke-width="1.700"/></svg>
<div class="t" style="left:63px;top:254px;font-size:10px;font-weight:bold;line-height:10px;height:10px;color:#c4002c;transform:scaleX(.74);transform-origin:0 0;letter-spacing:0">S</div>
<div class="t" style="left:70px;top:254px;font-size:10px;font-weight:bold;line-height:10px;height:10px;color:#1d5aa6;transform:scaleX(.74);transform-origin:0 0;letter-spacing:0">F</div>
<div class="t" style="left:80px;top:256px"><span style="letter-spacing:-0.688px">OPT_</span><span style="letter-spacing:-0.562px">NOISE_</span><span style="letter-spacing:-0.857px">REMOVAL</span><span class="q"><span style="letter-spacing:0.198px"> : int</span></span></div>
<div class="hd" style="left:41px;top:280px;width:12px"></div>
<svg class="ic" style="left:58px;top:277px" width="7" height="7" viewBox="0 0 7 7"><circle cx="3.500" cy="3.500" r="2.500" fill="#fff" stroke="#1c944a" stroke-width="1.700"/></svg>
<div class="t" style="left:63px;top:271px;font-size:10px;font-weight:bold;line-height:10px;height:10px;color:#c4002c;transform:scaleX(.74);transform-origin:0 0;letter-spacing:0">S</div>
<div class="t" style="left:70px;top:271px;font-size:10px;font-weight:bold;line-height:10px;height:10px;color:#1d5aa6;transform:scaleX(.74);transform-origin:0 0;letter-spacing:0">F</div>
<div class="t" style="left:80px;top:273px"><span style="letter-spacing:-0.688px">OPT_</span><span style="letter-spacing:-0.777px">SILENCE_</span><span style="letter-spacing:-0.857px">REMOVAL</span><span class="q"><span style="letter-spacing:0.198px"> : int</span></span></div>
<div class="hd" style="left:41px;top:297px;width:12px"></div>
<svg class="ic" style="left:58px;top:294px" width="7" height="7" viewBox="0 0 7 7"><circle cx="3.500" cy="3.500" r="2.500" fill="#fff" stroke="#1c944a" stroke-width="1.700"/></svg>
<div class="t" style="left:63px;top:288px;font-size:10px;font-weight:bold;line-height:10px;height:10px;color:#c4002c;transform:scaleX(.74);transform-origin:0 0;letter-spacing:0">S</div>
<div class="t" style="left:70px;top:288px;font-size:10px;font-weight:bold;line-height:10px;height:10px;color:#1d5aa6;transform:scaleX(.74);transform-origin:0 0;letter-spacing:0">F</div>
<div class="t" style="left:80px;top:290px"><span style="letter-spacing:-0.688px">OPT_</span><span style="letter-spacing:-0.669px">SHOW_</span><span style="letter-spacing:-0.41px">TRAINING_</span><span style="letter-spacing:-0.883px">SET_</span><span style="letter-spacing:-0.18px">DATA</span><span class="q"><span style="letter-spacing:0.198px"> : int</span></span></div>
<div class="hd" style="left:41px;top:314px;width:12px"></div>
<svg class="ic" style="left:58px;top:311px" width="7" height="7" viewBox="0 0 7 7"><circle cx="3.500" cy="3.500" r="2.500" fill="#fff" stroke="#1c944a" stroke-width="1.700"/></svg>
<div class="t" style="left:63px;top:305px;font-size:10px;font-weight:bold;line-height:10px;height:10px;color:#c4002c;transform:scaleX(.74);transform-origin:0 0;letter-spacing:0">S</div>
<div class="t" style="left:70px;top:305px;font-size:10px;font-weight:bold;line-height:10px;height:10px;color:#1d5aa6;transform:scaleX(.74);transform-origin:0 0;letter-spacing:0">F</div>
<div class="t" style="left:80px;top:307px"><span style="letter-spacing:-0.688px">OPT_</span><span style="letter-spacing:-1.022px">NO_PREPREP</span><span class="q"><span style="letter-spacing:0.198px"> : int</span></span></div>
<div class="hd" style="left:41px;top:331px;width:12px"></div>
<svg class="ic" style="left:58px;top:328px" width="7" height="7" viewBox="0 0 7 7"><circle cx="3.500" cy="3.500" r="2.500" fill="#fff" stroke="#1c944a" stroke-width="1.700"/></svg>
<div class="t" style="left:63px;top:322px;font-size:10px;font-weight:bold;line-height:10px;height:10px;color:#c4002c;transform:scaleX(.74);transform-origin:0 0;letter-spacing:0">S</div>
<div class="t" style="left:70px;top:322px;font-size:10px;font-weight:bold;line-height:10px;height:10px;color:#1d5aa6;transform:scaleX(.74);transform-origin:0 0;letter-spacing:0">F</div>
<div class="t" style="left:80px;top:324px"><span style="letter-spacing:-0.688px">OPT_</span><span style="letter-spacing:-0.777px">SILENCE_</span><span style="letter-spacing:-0.562px">NOISE_</span><span style="letter-spacing:-0.857px">REMOVAL</span><span class="q"><span style="letter-spacing:0.198px"> : int</span></span></div>
<div class="hd" style="left:41px;top:348px;width:12px"></div>
<svg class="ic" style="left:58px;top:345px" width="7" height="7" viewBox="0 0 7 7"><circle cx="3.500" cy="3.500" r="2.500" fill="#fff" stroke="#1c944a" stroke-width="1.700"/></svg>
<div class="t" style="left:63px;top:339px;font-size:10px;font-weight:bold;line-height:10px;height:10px;color:#c4002c;transform:scaleX(.74);transform-origin:0 0;letter-spacing:0">S</div>
<div class="t" style="left:70px;top:339px;font-size:10px;font-weight:bold;line-height:10px;height:10px;color:#1d5aa6;transform:scaleX(.74);transform-origin:0 0;letter-spacing:0">F</div>
<div class="t" style="left:80px;top:341px"><span style="letter-spacing:-0.688px">OPT_</span><span style="letter-spacing:-0.41px">TRAINING_</span><span style="letter-spacing:-0.875px">MODEL_</span><span style="letter-spacing:-0.781px">MEAN_</span><span style="letter-spacing:-1.049px">CLUSTER</span><span class="q"><span style="letter-spacing:0.198px"> : int</span></span></div>
<div class="hd" style="left:41px;top:365px;width:12px"></div>
<svg class="ic" style="left:58px;top:362px" width="7" height="7" viewBox="0 0 7 7"><circle cx="3.500" cy="3.500" r="2.500" fill="#fff" stroke="#1c944a" stroke-width="1.700"/></svg>
<div class="t" style="left:63px;top:356px;font-size:10px;font-weight:bold;line-height:10px;height:10px;color:#c4002c;transform:scaleX(.74);transform-origin:0 0;letter-spacing:0">S</div>
<div class="t" style="left:70px;top:356px;font-size:10px;font-weight:bold;line-height:10px;height:10px;color:#1d5aa6;transform:scaleX(.74);transform-origin:0 0;letter-spacing:0">F</div>
<div class="t" style="left:80px;top:358px"><span style="letter-spacing:-0.688px">OPT_</span><span style="letter-spacing:-0.41px">TRAINING_</span><span style="letter-spacing:-0.875px">MODEL_</span><span style="letter-spacing:-0.558px">MEDIAN_</span><span style="letter-spacing:-1.049px">CLUSTER</span><span class="q"><span style="letter-spacing:0.198px"> : int</span></span></div>
<div class="hd" style="left:41px;top:382px;width:12px"></div>
<svg class="ic" style="left:58px;top:379px" width="7" height="7" viewBox="0 0 7 7"><circle cx="3.500" cy="3.500" r="2.500" fill="#fff" stroke="#1c944a" stroke-width="1.700"/></svg>
<div class="t" style="left:63px;top:373px;font-size:10px;font-weight:bold;line-height:10px;height:10px;color:#c4002c;transform:scaleX(.74);transform-origin:0 0;letter-spacing:0">S</div>
<div class="t" style="left:70px;top:373px;font-size:10px;font-weight:bold;line-height:10px;height:10px;color:#1d5aa6;transform:scaleX(.74);transform-origin:0 0;letter-spacing:0">F</div>
<div class="t" style="left:80px;top:375px"><span style="letter-spacing:-0.688px">OPT_</span><span style="letter-spacing:-0.41px">TRAINING_</span><span style="letter-spacing:-0.875px">MODEL_</span><span style="letter-spacing:-0.824px">FEATURE_SET</span><span class="q"><span style="letter-spacing:0.198px"> : int</span></span></div>
<div class="hd" style="left:41px;top:399px;width:12px"></div>
<svg class="ic" style="left:58px;top:396px" width="7" height="7" viewBox="0 0 7 7"><circle cx="3.500" cy="3.500" r="2.500" fill="#fff" stroke="#1c944a" stroke-width="1.700"/></svg>
<div class="t" style="left:63px;top:390px;font-size:10px;font-weight:bold;line-height:10px;height:10px;color:#c4002c;transform:scaleX(.74);transform-origin:0 0;letter-spacing:0">S</div>
<div class="t" style="left:70px;top:390px;font-size:10px;font-weight:bold;line-height:10px;height:10px;color:#1d5aa6;transform:scaleX(.74);transform-origin:0 0;letter-spacing:0">F</div>
<div class="t" style="left:80px;top:392px"><span style="letter-spacing:-0.604px">DEFAULT_</span><span style="letter-spacing:-0.93px">SEVERITY</span><span class="q"><span style="letter-spacing:0.253px"> : Integer</span></span></div>
<div class="hd" style="left:41px;top:416px;width:12px"></div>
<svg class="ic" style="left:58px;top:413px" width="7" height="7" viewBox="0 0 7 7"><circle cx="3.500" cy="3.500" r="2.500" fill="#fff" stroke="#1c944a" stroke-width="1.700"/></svg>
<div class="t" style="left:63px;top:407px;font-size:10px;font-weight:bold;line-height:10px;height:10px;color:#c4002c;transform:scaleX(.74);transform-origin:0 0;letter-spacing:0">S</div>
<div class="t" style="left:70px;top:407px;font-size:10px;font-weight:bold;line-height:10px;height:10px;color:#1d5aa6;transform:scaleX(.74);transform-origin:0 0;letter-spacing:0">F</div>
<div class="t" style="left:80px;top:409px"><span style="letter-spacing:-0.604px">DEFAULT_</span><span style="letter-spacing:-0.653px">PROBABILITY</span><span class="q"><span style="letter-spacing:-0.118px"> : Double</span></span></div>
<div class="hd" style="left:41px;top:433px;width:12px"></div>
<svg class="ic" style="left:58px;top:430px" width="7" height="7" viewBox="0 0 7 7"><circle cx="3.500" cy="3.500" r="2.500" fill="#fff" stroke="#1c944a" stroke-width="1.700"/></svg>
<div class="t" style="left:63px;top:424px;font-size:10px;font-weight:bold;line-height:10px;height:10px;color:#c4002c;transform:scaleX(.74);transform-origin:0 0;letter-spacing:0">S</div>
<div class="t" style="left:70px;top:424px;font-size:10px;font-weight:bold;line-height:10px;height:10px;color:#1d5aa6;transform:scaleX(.74);transform-origin:0 0;letter-spacing:0">F</div>
<div class="t" style="left:80px;top:426px"><span style="letter-spacing:-0.549px">DISTANCE_</span><span style="letter-spacing:-0.983px">THRESHOLD</span><span class="q"><span style="letter-spacing:-0.118px"> : Double</span></span></div>
<div class="hd" style="left:41px;top:450px;width:12px"></div>
<svg class="ic" style="left:58px;top:447px" width="7" height="7" viewBox="0 0 7 7"><circle cx="3.500" cy="3.500" r="2.500" fill="#fff" stroke="#1c944a" stroke-width="1.700"/></svg>
<div class="t" style="left:63px;top:441px;font-size:10px;font-weight:bold;line-height:10px;height:10px;color:#c4002c;transform:scaleX(.74);transform-origin:0 0;letter-spacing:0">S</div>
<div class="t" style="left:70px;top:441px;font-size:10px;font-weight:bold;line-height:10px;height:10px;color:#1d5aa6;transform:scaleX(.74);transform-origin:0 0;letter-spacing:0">F</div>
<div class="t" style="left:80px;top:443px"><span style="letter-spacing:-0.389px">SIMILARITY_</span><span style="letter-spacing:-0.983px">THRESHOLD</span><span class="q"><span style="letter-spacing:-0.118px"> : Double</span></span></div>
<div class="hd" style="left:41px;top:467px;width:12px"></div>
<svg class="ic" style="left:58px;top:464px" width="7" height="7" viewBox="0 0 7 7"><circle cx="3.500" cy="3.500" r="2.500" fill="#fff" stroke="#1c944a" stroke-width="1.700"/></svg>
<div class="t" style="left:63px;top:458px;font-size:10px;font-weight:bold;line-height:10px;height:10px;color:#c4002c;transform:scaleX(.74);transform-origin:0 0;letter-spacing:0">S</div>
<div class="t" style="left:70px;top:458px;font-size:10px;font-weight:bold;line-height:10px;height:10px;color:#1d5aa6;transform:scaleX(.74);transform-origin:0 0;letter-spacing:0">F</div>
<div class="t" style="left:80px;top:460px"><span style="letter-spacing:-0.609px">PROBABILITY_</span><span style="letter-spacing:-0.983px">THRESHOLD</span><span class="q"><span style="letter-spacing:-0.118px"> : Double</span></span></div>
<div class="hd" style="left:41px;top:484px;width:12px"></div>
<div style="left:59px;top:482px;width:5px;height:5px;transform:rotate(45deg);border:1px solid #d89a18;background:#fffbe0"></div>
<div class="t" style="left:70px;top:475px;font-size:10px;font-weight:bold;line-height:10px;height:10px;color:#c4002c;transform:scaleX(.74);transform-origin:0 0;letter-spacing:0">S</div>
<div class="t" style="left:80px;top:477px"><span style="letter-spacing:-0.141px">soGetOpt</span><span class="q"><span style="letter-spacing:-0.12px"> : OptionProcessor</span></span></div>
<div class="hd" style="left:41px;top:501px;width:12px"></div>
<div style="left:58px;top:499px;width:7px;height:7px;border:1px solid #c82838;background:#e8788a"></div>
<div class="t" style="left:70px;top:492px;font-size:10px;font-weight:bold;line-height:10px;height:10px;color:#c4002c;transform:scaleX(.74);transform-origin:0 0;letter-spacing:0">S</div>
<div class="t" style="left:80px;top:494px"><span style="letter-spacing:1.094px">{...}</span></div>
<div class="hd" style="left:45px;top:518px;width:8px"></div>
<div class="exp" style="left:35px;top:514px"><i></i></div>
<div style="left:54px;top:510px;width:13px;height:13px;border-radius:50%;background:radial-gradient(circle at 40% 35%,#62bc72,#2f8f44);border:1px solid #2a8a40"></div>
<div class="t" style="left:56.5px;top:508.5px;font-weight:bold;font-size:11px;color:#fff;line-height:16px;height:16px">C</div>
<div class="t" style="left:70px;top:509px;font-size:10px;font-weight:bold;line-height:10px;height:10px;color:#c4002c;transform:scaleX(.74);transform-origin:0 0;letter-spacing:0">S</div>
<div class="t" style="left:80px;top:511px"><span style="letter-spacing:-0.036px">Configuration</span></div>
<div class="hd" style="left:66px;top:535px;width:12px"></div>
<svg class="ic" style="left:83px;top:532px" width="8" height="7" viewBox="0 0 8 7"><path d="M4 1.200 L7 6 H1 Z" fill="#fff" stroke="#1a5aa8" stroke-width="1.300"/></svg>
<div class="t" style="left:105px;top:528px"><span style="letter-spacing:-0.082px">strFilePrefix</span><span class="q"><span style="letter-spacing:0.007px"> : String</span></span></div>
<div class="hd" style="left:66px;top:552px;width:12px"></div>
<svg class="ic" style="left:83px;top:549px" width="8" height="7" viewBox="0 0 8 7"><path d="M4 1.200 L7 6 H1 Z" fill="#fff" stroke="#1a5aa8" stroke-width="1.300"/></svg>
<div class="t" style="left:105px;top:545px"><span style="letter-spacing:-0.319px">bBinarize</span><span class="q"><span style="letter-spacing:-0.037px"> : boolean</span></span></div>
<div class="hd" style="left:66px;top:569px;width:12px"></div>
<svg class="ic" style="left:83px;top:566px" width="8" height="7" viewBox="0 0 8 7"><path d="M4 1.200 L7 6 H1 Z" fill="#fff" stroke="#1a5aa8" stroke-width="1.300"/></svg>
<div class="t" style="left:105px;top:562px"><span style="letter-spacing:-0.354px">bZSSkeletonizing</span><span class="q"><span style="letter-spacing:-0.037px"> : boolean</span></span></div>
<div class="hd" style="left:66px;top:586px;width:12px"></div>
<svg class="ic" style="left:83px;top:583px" width="8" height="7" viewBox="0 0 8 7"><path d="M4 1.200 L7 6 H1 Z" fill="#fff" stroke="#1a5aa8" stroke-width="1.300"/></svg>
<div class="t" style="left:105px;top:579px"><span style="letter-spacing:-0.491px">bZSFilling</span><span class="q"><span style="letter-spacing:-0.037px"> : boolean</span></span></div>
<div class="hd" style="left:66px;top:603px;width:12px"></div>
<svg class="ic" style="left:83px;top:600px" width="8" height="7" viewBox="0 0 8 7"><path d="M4 1.200 L7 6 H1 Z" fill="#fff" stroke="#1a5aa8" stroke-width="1.300"/></svg>
<div class="t" style="left:105px;top:596px"><span style="letter-spacing:-0.401px">bZSThinning</span><span class="q"><span style="letter-spacing:-0.037px"> : boolean</span></span></div>
<div class="hd" style="left:66px;top:620px;width:12px"></div>
<svg class="ic" style="left:83px;top:617px" width="8" height="7" viewBox="0 0 8 7"><path d="M4 1.200 L7 6 H1 Z" fill="#fff" stroke="#1a5aa8" stroke-width="1.300"/></svg>
<div class="t" style="left:105px;top:613px"><span style="letter-spacing:-0.225px">bZSCountouring</span><span class="q"><span style="letter-spacing:-0.037px"> : boolean</span></span></div>
<div class="hd" style="left:66px;top:637px;width:12px"></div>
<svg class="ic" style="left:83px;top:634px" width="8" height="7" viewBox="0 0 8 7"><path d="M4 1.200 L7 6 H1 Z" fill="#fff" stroke="#1a5aa8" stroke-width="1.300"/></svg>
<div class="t" style="left:105px;top:630px"><span style="letter-spacing:-0.134px">iRepeat</span><span class="q"><span style="letter-spacing:0.198px"> : int</span></span></div>
<div class="hd" style="left:66px;top:654px;width:12px"></div>
<div style="left:82px;top:651px;width:8px;height:8px;border-radius:50%;border:1px solid #2f8a3e;background:radial-gradient(circle at 35% 35%,#b6e0b0,#4aa658)"></div>
<div class="t" style="left:93px;top:644px;font-size:10px;font-weight:bold;line-height:10px;height:10px;color:#1a9a2a;transform:scaleX(.74);transform-origin:0 0;letter-spacing:0">c</div>
<div class="t" style="left:105px;top:647px"><span style="letter-spacing:0.015px">Configuration()</span></div>
<div class="hd" style="left:66px;top:671px;width:12px"></div>
<div style="left:82px;top:668px;width:8px;height:8px;border-radius:50%;border:1px solid #2f8a3e;background:radial-gradient(circle at 35% 35%,#b6e0b0,#4aa658)"></div>
<svg class="ic" style="left:93px;top:671px" width="7" height="5" viewBox="0 0 7 5"><path d="M3.500 .5 L6.500 4.500 H.5 Z" fill="#c0a0e0" stroke="#6a3ab0" stroke-width=".8"/></svg>
<div class="t" style="left:105px;top:664px"><span style="letter-spacing:0.075px">toString()</span><span class="q"><span style="letter-spacing:0.007px"> : String</span></span></div>
<div class="hd" style="left:41px;top:688px;width:12px"></div>
<div style="left:79px;top:680px;width:102px;height:17px;background:#d4d0c8"></div>
<div style="left:57px;top:685px;width:8px;height:8px;border-radius:50%;border:1px solid #2f8a3e;background:radial-gradient(circle at 35% 35%,#b6e0b0,#4aa658)"></div>
<div class="t" style="left:63px;top:679px;font-size:10px;font-weight:bold;line-height:10px;height:10px;color:#c4002c;transform:scaleX(.74);transform-origin:0 0;letter-spacing:0">S</div>
<div class="t" style="left:70px;top:679px;font-size:10px;font-weight:bold;line-height:10px;height:10px;color:#1d5aa6;transform:scaleX(.74);transform-origin:0 0;letter-spacing:0">F</div>
<div class="t" style="left:80px;top:681px"><span style="letter-spacing:-0.006px">main(String[]) </span><span style="letter-spacing:0.115px">: void</span></div>
<div class="t" style="left:70px;top:696px;font-size:10px;font-weight:bold;line-height:10px;height:10px;color:#c4002c;transform:scaleX(.74);transform-origin:0 0;letter-spacing:0">S</div>
</div>
<div class="sbtrack" style="left:1577px;top:121px;width:16px;height:698px"></div><div class="sbb" style="left:1577px;top:121px"><svg width="12" height="12" viewBox="2 2 12 12" style="position:absolute;left:0;top:0"><path d="M4.5 9.5 L8 6 L11.5 9.5 Z" fill="#000"/></svg></div><div class="sbb" style="left:1577px;top:803px"><svg width="12" height="12" viewBox="2 2 12 12" style="position:absolute;left:0;top:0"><path d="M4.5 6.5 L8 10 L11.5 6.5 Z" fill="#000"/></svg></div><div class="sbt" style="left:1577px;top:353px;width:12px;height:365px"></div>
<div class="sbtrack" style="left:1339px;top:819px;width:238px;height:16px"></div><div class="sbb" style="left:1339px;top:819px"><svg width="12" height="12" viewBox="2 2 12 12" style="position:absolute;left:0;top:0"><path d="M9.5 4.5 L6 8 L9.5 11.5 Z" fill="#000"/></svg></div><div class="sbb" style="left:1561px;top:819px"><svg width="12" height="12" viewBox="2 2 12 12" style="position:absolute;left:0;top:0"><path d="M6.5 4.5 L10 8 L6.5 11.5 Z" fill="#000"/></svg></div><div class="sbt" style="left:1355px;top:819px;width:112px;height:12px"></div>
<div style="left:1577px;top:819px;width:16px;height:16px;background:#d4d0c8"></div>
<div style="left:0;top:0;z-index:2"><svg class="ic" style="left:1342px;top:76px" width="13" height="13" viewBox="0 0 13 13"><rect x=".5" y=".5" width="4" height="4" fill="#fff" stroke="#2a5aa8"/><rect x=".5" y="8.500" width="4" height="4" fill="#fff" stroke="#2a5aa8"/><path d="M6 2.500 H12.500 M6 10.500 H12.500" stroke="#2a5aa8"/><rect x="6.500" y="5.500" width="2" height="2" fill="none" stroke="#2a5aa8" stroke-width=".8"/></svg><div class="t" style="left:1359px;top:76px"><span style="letter-spacing:-0.125px">Outline</span></div><svg class="ic" style="left:1401px;top:78px" width="11" height="11" viewBox="0 0 11 11"><path d="M1.500 1 H3.500 L5.500 3.200 L7.500 1 H9.500 V2.500 L7.300 5 L9.500 7.500 V9.500 H7.500 L5.500 7.200 L3.500 9.500 H1.500 V7.500 L3.700 5 L1.500 2.500 Z" fill="#fff" stroke="#000" stroke-width="1"/></svg><div style="left:1561px;top:76px;width:10px;height:4px;border:1px solid #404040;background:#fff;box-shadow:0 0 0 1px rgba(255,255,255,.35)"></div><div style="left:1579px;top:76px;width:10px;height:10px;border:1px solid #404040;background:#fff;box-shadow:0 0 0 1px rgba(255,255,255,.35)"><div style="left:0;top:1px;width:8px;height:1px;background:#404040"></div></div><svg class="ic" style="left:1457px;top:100px" width="18" height="16" viewBox="0 0 18 16"><path d="M3.500 1 V12 M1 9.500 L3.500 12.500 L6 9.500" stroke="#4a5a78" fill="none"/><text x="6" y="8" font-family="Liberation Serif, serif" font-weight="bold" font-size="10" fill="#1a8a6a">a</text><text x="10.500" y="15" font-family="Liberation Serif, serif" font-weight="bold" font-size="10" fill="#8a2a9a">z</text></svg><svg class="ic" style="left:1483px;top:100px" width="16" height="16" viewBox="0 0 16 16"><circle cx="7.500" cy="8" r="5.500" fill="#5ab4f4" stroke="#2a8ae0"/><circle cx="7" cy="7.500" r="2.500" fill="#fff" opacity=".8"/><path d="M.5 1 L14.500 15" stroke="#0a1a8a" stroke-width="1.200"/></svg><svg class="ic" style="left:1507px;top:100px" width="16" height="16" viewBox="0 0 16 16"><circle cx="5.500" cy="9.500" r="3" fill="#b4b4b4" stroke="#8a8a8a"/><path d="M.5 3.500 L11.500 15" stroke="#0a1a8a" stroke-width="1.200"/><text x="9" y="7" font-family="Liberation Sans, sans-serif" font-size="8" fill="#2a62a4">S</text></svg><div style="left:1534px;top:104px;width:9px;height:9px;border-radius:50%;background:radial-gradient(circle at 40% 40%,#a8dca0,#4aa658);border:1px solid #3a9a4a"></div><svg class="ic" style="left:1555px;top:100px" width="16" height="16" viewBox="0 0 16 16"><circle cx="5.500" cy="9.500" r="3" fill="#b4b4b4" stroke="#8a8a8a"/><path d="M.5 3.500 L11.500 15" stroke="#0a1a8a" stroke-width="1.200"/><text x="9.500" y="7" font-family="Liberation Sans, sans-serif" font-size="8" fill="#2a62a4">L</text></svg><svg class="ic" style="left:1579px;top:101px" width="11" height="6" viewBox="0 0 11 6"><path d="M.8 .6 H10.200 L5.500 5.300 Z" fill="#fff" stroke="#000" stroke-width="1"/></svg></div>
<div style="left:447px;top:882px;width:1130px;height:239px;background:#fff"></div>
<div class="con" style="top:883px">Done. [52]</div>
<div class="con" style="top:900px">Filling Pass: 14... Filling1: Pattern Size: 480 x 300</div>
<div class="con" style="top:917px">Done. [19]</div>
<div class="con" style="top:934px">Filling Pass: 15... Filling1: Pattern Size: 480 x 300</div>
<div class="con" style="top:951px">Done. [3]</div>
<div class="con" style="top:968px">Filling Pass: 16... Filling1: Pattern Size: 480 x 300</div>
<div class="con" style="top:985px">Done. [0]</div>
<div class="con" style="top:1002px">Thinning Pass: 17... Thinning1: Pattern Size: 480 x 300</div>
<div class="con" style="top:1019px">Done. [1772]</div>
<div class="con" style="top:1036px">Thinning Pass: 18... Thinning1: Pattern Size: 480 x 300</div>
<div class="con" style="top:1053px">Done. [457]</div>
<div class="con" style="top:1070px">Thinning Pass: 19... Thinning1: Pattern Size: 480 x 300</div>
<div class="con" style="top:1087px">Done. [182]</div>
<div class="con" style="top:1104px">Thinning Pass: 20... Thinning1: Pattern Size: 480 x 300</div>
<div class="sbtrack" style="left:1577px;top:882px;width:16px;height:239px"></div><div class="sbb" style="left:1577px;top:882px"><svg width="12" height="12" viewBox="2 2 12 12" style="position:absolute;left:0;top:0"><path d="M4.5 9.5 L8 6 L11.5 9.5 Z" fill="#000"/></svg></div><div class="sbb" style="left:1577px;top:1105px"><svg width="12" height="12" viewBox="2 2 12 12" style="position:absolute;left:0;top:0"><path d="M4.5 6.5 L8 10 L11.5 6.5 Z" fill="#000"/></svg></div><div class="sbt" style="left:1577px;top:949px;width:12px;height:4px"></div>
<div class="sbtrack" style="left:447px;top:1121px;width:1130px;height:16px"></div><div class="sbb" style="left:447px;top:1121px"><svg width="12" height="12" viewBox="2 2 12 12" style="position:absolute;left:0;top:0"><path d="M9.5 4.5 L6 8 L9.5 11.5 Z" fill="#fff" transform="translate(1,1)"/><path d="M9.5 4.5 L6 8 L9.5 11.5 Z" fill="#808080"/></svg></div><div class="sbb" style="left:1561px;top:1121px"><svg width="12" height="12" viewBox="2 2 12 12" style="position:absolute;left:0;top:0"><path d="M6.5 4.5 L10 8 L6.5 11.5 Z" fill="#fff" transform="translate(1,1)"/><path d="M6.5 4.5 L10 8 L6.5 11.5 Z" fill="#808080"/></svg></div>
<div style="left:1577px;top:1121px;width:16px;height:16px;background:#d4d0c8"></div>
<div style="left:0;top:0;z-index:2"><svg class="ic" style="left:448px;top:845px" width="16" height="16" viewBox="0 0 16 16"><path d="M1.500 1.500 H12 V14.500 H1.500 Z" fill="#fff" stroke="#8aa0d0"/><path d="M12 2 Q14.500 3 13 6 Q12 9 14 12" stroke="#8aa0d0" fill="none"/><path d="M1.500 8.500 H12 M6.500 8.500 V14.500" stroke="#8aa0d0"/><circle cx="6" cy="5" r="2.500" fill="#e03838"/><path d="M4 13.500 L6 10 L8 13.500 Z" fill="#f8c030" stroke="#d08a10" stroke-width=".6"/></svg><div class="t" style="left:467px;top:846px"><span style="letter-spacing:-0.434px">Problems</span></div><div class="t" style="left:521px;top:844px;color:#2a7ad0;font-size:12px">@</div><div class="t" style="left:539px;top:846px"><span style="letter-spacing:-0.143px">Javadoc</span></div><svg class="ic" style="left:588px;top:845px" width="16" height="16" viewBox="0 0 16 16"><path d="M1.500 .5 H8 L10.500 3 V12.500 H1.500 Z" fill="#fff" stroke="#b49a50"/><path d="M8 .5 V3 H10.500" fill="#f4d880" stroke="#c8a040" stroke-width=".7"/><path d="M5 3 Q3 6 5 9 M6.500 5 H9 M6.500 7 H9" stroke="#3a62c8" fill="none" stroke-width=".9"/><path d="M6 11 H10.500 V9 L14.500 12 L10.500 15 V13 H6 Z" fill="#fbd470" stroke="#d89a20" stroke-width=".9"/></svg><div class="t" style="left:606px;top:846px"><span style="letter-spacing:-0.151px">Declaration</span></div><svg class="ic" style="left:668px;top:845px" width="16" height="16" viewBox="0 0 16 16"><path d="M1 14.500 L4 9.500 L7 12.500 Z" fill="#fff4b0" stroke="#e0b830" stroke-width=".8"/><path d="M4 9.500 L6.500 6.500 L10 10 L7 12.500 Z" fill="#a09a98" stroke="#6a6462" stroke-width=".8"/><path d="M6.500 6.500 L11 1.500 Q13.500 .5 15 2.500 Q15.500 4.500 14.500 5.500 L10 10 Z" fill="#f8cc70" stroke="#c8862a" stroke-width=".9"/><circle cx="12" cy="3.500" r=".9" fill="#3a62c8"/></svg><div class="t" style="left:689px;top:846px"><span style="letter-spacing:-0.312px">Search</span></div><svg class="ic" style="left:731px;top:845px" width="15" height="15" viewBox="0 0 15 15"><rect x="1" y="1" width="12" height="9" rx="1" fill="#e8f0fc" stroke="#2a5ab8" stroke-width="1.600"/><path d="M3.500 4 H9 M3.500 6.500 H7" stroke="#2a5ab8"/><path d="M7 10.500 V12.500 M3 13 H11" stroke="#2a5ab8" stroke-width="1.600"/></svg><div class="t" style="left:750px;top:846px"><span style="letter-spacing:-0.339px">Console</span></div><svg class="ic" style="left:796px;top:848px" width="11" height="11" viewBox="0 0 11 11"><path d="M1.500 1 H3.500 L5.500 3.200 L7.500 1 H9.500 V2.500 L7.300 5 L9.500 7.500 V9.500 H7.500 L5.500 7.200 L3.500 9.500 H1.500 V7.500 L3.700 5 L1.500 2.500 Z" fill="#fff" stroke="#000" stroke-width="1"/></svg><div style="left:1282px;top:849px;width:9px;height:9px;border:1px solid #dcc8cc;background:#d0aab0;outline:1px solid #e4dcda"></div><svg class="ic" style="left:1303px;top:846px" width="14" height="14" viewBox="0 0 14 14"><path d="M2 3.500 L3.500 2 L7 5 L10.500 2 L12 3.500 L9 7 L12 10.500 L10.500 12 L7 9 L3.500 12 L2 10.500 L5 7 Z" fill="#747474" stroke="#585858" stroke-width="1.500" stroke-linejoin="round"/></svg><svg class="ic" style="left:1326px;top:845px" width="16" height="16" viewBox="0 0 16 16"><path d="M1.500 2.500 L2.500 1.500 L5.500 4.500 L8.500 1.500 L9.500 2.500 L6.500 5.500 L9.500 8.500 L8.500 9.500 L5.500 6.500 L2.500 9.500 L1.500 8.500 L4.500 5.500 Z" fill="#f0f0ee" stroke="#8a8a88" stroke-width=".9" stroke-linejoin="round"/><path d="M5.500 6.500 L6.500 5.500 L10 8.500 L13.500 5.500 L14.500 6.500 L11.500 10 L14.500 13.500 L13.500 14.500 L10 11.500 L6.500 14.500 L5.500 13.500 L8.500 10 Z" fill="#6a6a6a" stroke="#5a5a5a" stroke-width="1.200" stroke-linejoin="round"/></svg><div style="left:1349px;top:844px;width:2px;height:18px;border-left:1px solid #808080;border-right:1px solid #fff"></div><svg class="ic" style="left:1359px;top:846px" width="16" height="16" viewBox="0 0 16 16"><path d="M1.500 .5 H7 L9.500 3 V12.500 H1.500 Z" fill="#fff" stroke="#b49a50"/><path d="M3 4.500 H8 M3 6.500 H8 M3 8.500 H8" stroke="#7a90c8"/><path d="M8.500 9.500 L14.500 14.500 M14.500 9.500 L8.500 14.500" stroke="#3a3a3a" stroke-width="1.800"/></svg><svg class="ic" style="left:1383px;top:846px" width="16" height="16" viewBox="0 0 16 16"><rect x="8.500" y="1.500" width="6" height="13" fill="#fff" stroke="#8aa0d0"/><rect x="10.500" y="3.500" width="2" height="2" fill="#8aa0d0"/><rect x="10.500" y="8.500" width="2" height="2" fill="#8aa0d0"/><rect x="1.500" y="8.500" width="8" height="6" rx="1" fill="#f8c830" stroke="#b8860a"/><path d="M3.500 8.500 V6 Q3.500 3.500 5.500 3.500 Q7.500 3.500 7.500 6 V8.500" fill="none" stroke="#b8860a" stroke-width="1.300"/><circle cx="5.500" cy="11.500" r="1" fill="#5a4008"/></svg><div style="left:1402px;top:842px;width:24px;height:22px;border:1px solid;border-color:#808080 #fff #fff #808080;background-color:#fff;background-image:conic-gradient(#d4d0c8 25%,#fff 0 50%,#d4d0c8 0 75%,#fff 0);background-size:2px 2px"></div><div style="left:1427px;top:842px;width:24px;height:22px;border:1px solid;border-color:#808080 #fff #fff #808080;background-color:#fff;background-image:conic-gradient(#d4d0c8 25%,#fff 0 50%,#d4d0c8 0 75%,#fff 0);background-size:2px 2px"></div><svg class="ic" style="left:1407px;top:846px" width="16" height="16" viewBox="0 0 16 16"><rect x="4.500" y="1.500" width="11" height="8" fill="#e8f0fc" stroke="#3a6ac8"/><path d="M6.500 4 H13 M6.500 6.500 H11" stroke="#3a6ac8"/><rect x="1.500" y="6.500" width="5" height="5" fill="#c8d8f4" stroke="#3a6ac8"/><path d="M4 12 V14 M1.500 14.500 H7" stroke="#3a6ac8" stroke-width="1.300"/></svg><svg class="ic" style="left:1431px;top:846px" width="16" height="16" viewBox="0 0 16 16"><rect x="4.500" y="1.500" width="11" height="8" fill="#e8f0fc" stroke="#3a6ac8"/><path d="M7 3.500 L10 7 M10 3.500 L7 7" stroke="#e02828" stroke-width="1.400"/><path d="M11.500 5.500 H13.500" stroke="#e02828"/><rect x="1.500" y="6.500" width="5" height="5" fill="#c8d8f4" stroke="#3a6ac8"/><path d="M4 12 V14 M1.500 14.500 H7" stroke="#3a6ac8" stroke-width="1.300"/></svg><div style="left:1453px;top:844px;width:2px;height:18px;border-left:1px solid #808080;border-right:1px solid #fff"></div><svg class="ic" style="left:1463px;top:846px" width="16" height="16" viewBox="0 0 16 16"><rect x=".5" y="5.500" width="11" height="9" fill="#fff" stroke="#3a6ac8"/><rect x="1" y="6" width="10" height="2" fill="#3a78d8"/><path d="M7 8 L12 3 L14.500 5.500 L9.500 10.500 Z" fill="#3ab050" stroke="#1a7a30" stroke-width=".8"/><path d="M12 1 L15.500 4.500" stroke="#1a7a30" stroke-width="1.600"/><path d="M6 11 L8 9" stroke="#333"/></svg><svg class="ic" style="left:1487px;top:846px" width="16" height="16" viewBox="0 0 16 16"><rect x="1.500" y="1.500" width="12" height="9" rx="1" fill="#f0f0ee" stroke="#6a6a6a" stroke-width="1.600"/><path d="M4 4.500 H9 M4 7 H8" stroke="#6a6a6a"/><path d="M7.500 11 V13 M3.500 13.500 H11.500" stroke="#6a6a6a" stroke-width="1.600"/></svg><div class="dd" style="left:1510px;top:853px;border-top-color:#808080"></div><svg class="ic" style="left:1523px;top:846px" width="17" height="16" viewBox="0 0 17 16"><rect x=".5" y="3.500" width="12" height="11" fill="#fff" stroke="#a08030"/><rect x="1" y="4" width="11" height="2" fill="#3a78d8"/><path d="M12 7 Q12 13.500 6 14" stroke="#f0c040" stroke-width="1.500" fill="none"/><path d="M12.5 0 l1.200 2 l2 1.200 l-2 1.200 l-1.200 2 l-1.200 -2 l-2 -1.200 l2 -1.200 Z" fill="#fff8c0" stroke="#d8a010" stroke-width=".9"/></svg><div class="dd" style="left:1547px;top:852px;border-top-color:#000"></div><div style="left:1561px;top:846px;width:10px;height:4px;border:1px solid #404040;background:#fff;box-shadow:0 0 0 1px rgba(255,255,255,.35)"></div><div style="left:1579px;top:846px;width:10px;height:10px;border:1px solid #404040;background:#fff;box-shadow:0 0 0 1px rgba(255,255,255,.35)"><div style="left:0;top:1px;width:8px;height:1px;background:#404040"></div></div><div class="t" style="left:448px;top:866px"><span style="letter-spacing:0.238px">&lt;terminated&gt; </span><span style="letter-spacing:-0.493px">OCTMARFApp </span><span style="letter-spacing:0.104px">[Java </span><span style="letter-spacing:-0.075px">Application] </span><span style="letter-spacing:-0.119px">C:\Program </span><span style="letter-spacing:-0.214px">Files\</span><span style="letter-spacing:0.138px">Java\</span><span style="letter-spacing:0.319px">jre1.</span><span style="letter-spacing:0.141px">6.0_</span><span style="letter-spacing:0.134px">03\bin\</span><span style="letter-spacing:0.404px">javaw.</span><span style="letter-spacing:0.047px">exe </span><span style="letter-spacing:-0.094px">(Jan </span><span style="letter-spacing:0.023px">2, 2012 </span><span style="letter-spacing:0.043px">12:47:45 AM)</span></div></div>
<div class="sep" style="left:4px;top:1144px;height:18px"></div><svg class="ic" style="left:15px;top:1146px" width="16" height="15" viewBox="0 0 16 15"><rect x="1.500" y="2.500" width="5" height="11" fill="#e8f4fc" stroke="#b8a070"/><rect x="1" y="2" width="6" height="2.500" fill="#3a78c8"/><path d="M11.5 0 l1.200 2 l2 1.200 l-2 1.200 l-1.200 2 l-1.200 -2 l-2 -1.200 l2 -1.200 Z" fill="#fff8c0" stroke="#d8a010" stroke-width=".9"/></svg><div style="left:1090px;top:1142px;width:2px;height:25px;border-left:1px solid #808080;border-right:1px solid #fff"></div><div style="left:1179px;top:1142px;width:2px;height:25px;border-left:1px solid #808080;border-right:1px solid #fff"></div><div style="left:1263px;top:1142px;width:2px;height:25px;border-left:1px solid #808080;border-right:1px solid #fff"></div><div style="left:1349px;top:1142px;width:2px;height:19px;border-left:1px solid #808080;border-right:1px solid #fff"></div><div class="t" style="left:1098px;top:1146px"><span style="letter-spacing:-0.018px">Writable</span></div><div class="t" style="left:1187px;top:1146px"><span style="letter-spacing:-0.234px">Smart </span><span style="letter-spacing:0.245px">Insert</span></div><div class="t" style="left:1271px;top:1146px"><span style="letter-spacing:0.045px">470 : 1</span></div><div style="left:0;top:1171px;width:1600px;height:1px;background:#fff"></div>
</div>
</body></html>
